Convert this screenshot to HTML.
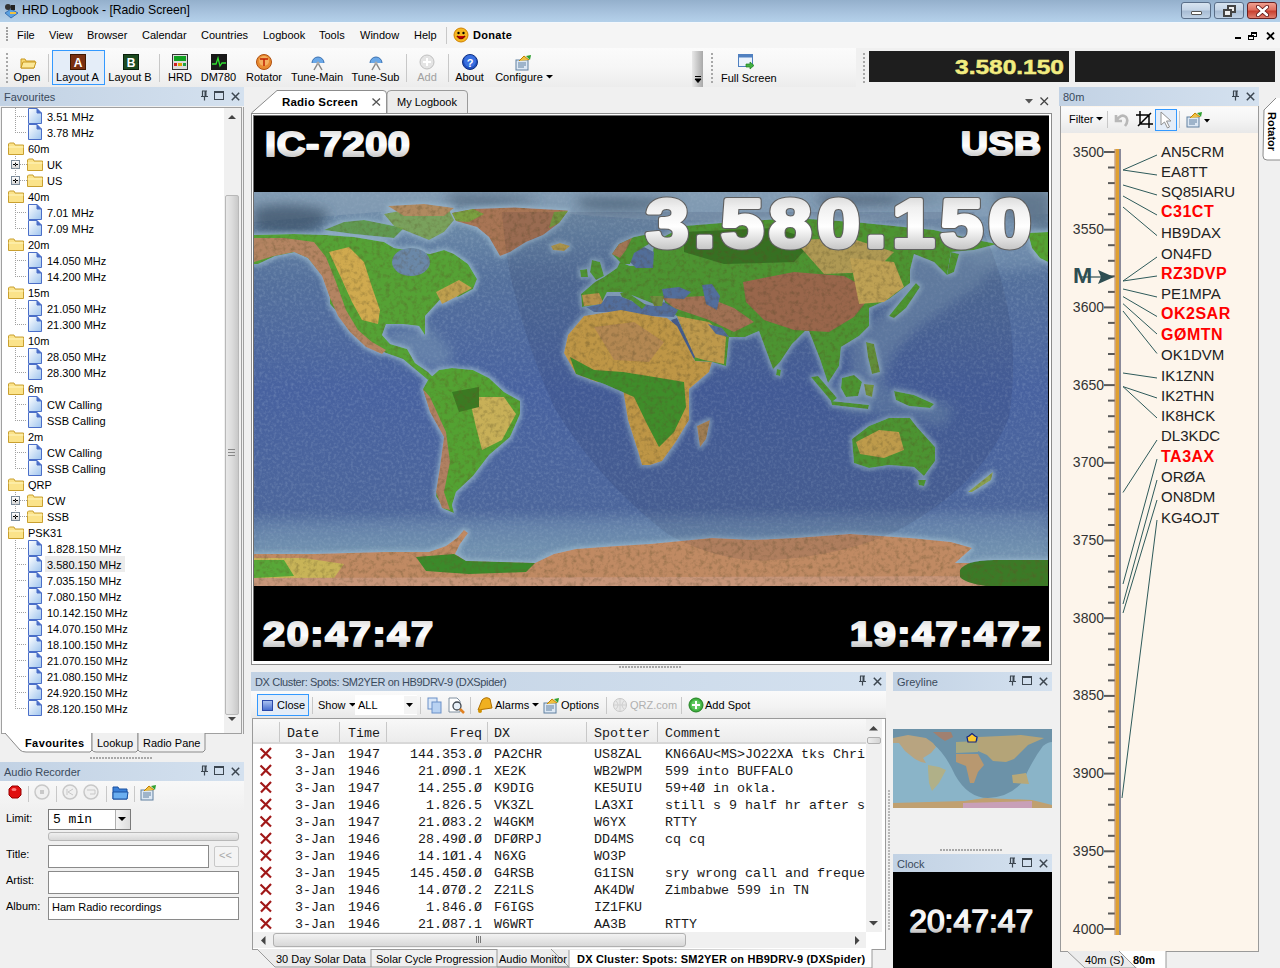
<!DOCTYPE html><html><head><meta charset="utf-8"><style>
*{box-sizing:border-box;margin:0;padding:0}
html,body{width:1280px;height:968px;overflow:hidden;background:#f0f0f0;font-family:"Liberation Sans",sans-serif;font-size:11px;color:#000}
.a{position:absolute}
.t{position:absolute;white-space:nowrap;line-height:1}
.hdr{position:absolute;height:19px;background:linear-gradient(#c9d8ea,#bccde2);color:#3c4a5a;font-size:12px}
.mono{font-family:"Liberation Mono",monospace}
</style></head><body>
<div class="a" style="left:0;top:0;width:1280px;height:22px;background:linear-gradient(#94b0cc,#a9c4df 60%,#b4d1ea)"></div>
<div class="a" style="left:0;top:22px;width:1280px;height:1px;background:#f4f8fc"></div>
<div class="t" style="left:22px;top:4px;font-size:12.2px;color:#000">HRD Logbook - [Radio Screen]</div>
<svg class="a" style="left:2px;top:2px" width="17" height="17"><path d="M3 11 L9 7 L16 11 L9 16 Z" fill="#5aa0e0" stroke="#3a70b0"/><circle cx="6" cy="5" r="3" fill="#333"/><rect x="9" y="3" width="4" height="5" fill="#222"/><rect x="8" y="10" width="6" height="2" fill="#f0c040"/></svg>
<div class="a" style="left:1181px;top:2px;width:30px;height:17px;border:1px solid #5a6e88;border-radius:3px;background:linear-gradient(#d8e4f0,#c4d4e6 45%,#a8bcd4 55%,#c0d2e6)"><div class="a" style="left:9px;top:8px;width:11px;height:4px;background:#fff;border:1px solid #555;border-radius:1px"></div></div>
<div class="a" style="left:1214px;top:2px;width:30px;height:17px;border:1px solid #5a6e88;border-radius:3px;background:linear-gradient(#d8e4f0,#c4d4e6 45%,#a8bcd4 55%,#c0d2e6)"><div class="a" style="left:12px;top:2px;width:9px;height:8px;border:2px solid #444;background:#eee"></div><div class="a" style="left:8px;top:6px;width:9px;height:8px;border:2px solid #444;background:#eee"></div></div>
<div class="a" style="left:1247px;top:2px;width:30px;height:17px;border:1px solid #6a2020;border-radius:3px;background:linear-gradient(#f0a090,#e07060 45%,#c84030 55%,#e08070)"><svg class="a" style="left:8px;top:2px" width="13" height="12"><path d="M2 2 L11 10 M11 2 L2 10" stroke="#5a1010" stroke-width="4.2" stroke-linecap="round"/><path d="M2 2 L11 10 M11 2 L2 10" stroke="#fff" stroke-width="2.6" stroke-linecap="round"/></svg></div>
<div class="a" style="left:0;top:23px;width:1280px;height:25px;background:#f5f5f5"></div>
<div class="a" style="left:6px;top:27px;width:2px;height:2px;background:#a0a0a0"></div>
<div class="a" style="left:6px;top:30px;width:2px;height:2px;background:#a0a0a0"></div>
<div class="a" style="left:6px;top:33px;width:2px;height:2px;background:#a0a0a0"></div>
<div class="a" style="left:6px;top:36px;width:2px;height:2px;background:#a0a0a0"></div>
<div class="a" style="left:6px;top:39px;width:2px;height:2px;background:#a0a0a0"></div>
<div class="t" style="left:17px;top:30px;font-size:11px">File</div>
<div class="t" style="left:49px;top:30px;font-size:11px">View</div>
<div class="t" style="left:87px;top:30px;font-size:11px">Browser</div>
<div class="t" style="left:142px;top:30px;font-size:11px">Calendar</div>
<div class="t" style="left:201px;top:30px;font-size:11px">Countries</div>
<div class="t" style="left:263px;top:30px;font-size:11px">Logbook</div>
<div class="t" style="left:319px;top:30px;font-size:11px">Tools</div>
<div class="t" style="left:360px;top:30px;font-size:11px">Window</div>
<div class="t" style="left:414px;top:30px;font-size:11px">Help</div>
<div class="a" style="left:446px;top:27px;width:1px;height:17px;background:#c8c8c8"></div>
<svg class="a" style="left:453px;top:27px" width="16" height="16"><circle cx="8" cy="8" r="7" fill="#f5b820" stroke="#d08000"/><circle cx="5.5" cy="6" r="1.2" fill="#000"/><circle cx="10.5" cy="6" r="1.2" fill="#000"/><path d="M4 9 Q8 14 12 9" stroke="#800" stroke-width="1.5" fill="#c00"/></svg>
<div class="t" style="left:473px;top:30px;font-size:11px;font-weight:bold;letter-spacing:0.3px">Donate</div>
<div class="a" style="left:1235px;top:37px;width:6px;height:2px;background:#000"></div>
<div class="a" style="left:1251px;top:32px;width:6px;height:5px;border:1px solid #000;border-top-width:2px"></div><div class="a" style="left:1248px;top:35px;width:6px;height:5px;border:1px solid #000;border-top-width:2px;background:#f5f5f5"></div>
<svg class="a" style="left:1266px;top:32px" width="9" height="8"><path d="M1 0.5 L8 7.5 M8 0.5 L1 7.5" stroke="#000" stroke-width="1.8"/></svg>
<div class="a" style="left:0;top:48px;width:706px;height:39px;background:linear-gradient(#fbfbfb,#f6f6f6 50%,#ececec)"></div>
<div class="a" style="left:6px;top:53px;width:2px;height:2px;background:#a8a8a8"></div>
<div class="a" style="left:6px;top:57px;width:2px;height:2px;background:#a8a8a8"></div>
<div class="a" style="left:6px;top:61px;width:2px;height:2px;background:#a8a8a8"></div>
<div class="a" style="left:6px;top:65px;width:2px;height:2px;background:#a8a8a8"></div>
<div class="a" style="left:6px;top:69px;width:2px;height:2px;background:#a8a8a8"></div>
<div class="a" style="left:6px;top:73px;width:2px;height:2px;background:#a8a8a8"></div>
<div class="a" style="left:6px;top:77px;width:2px;height:2px;background:#a8a8a8"></div>
<div class="a" style="left:6px;top:81px;width:2px;height:2px;background:#a8a8a8"></div>
<div class="a" style="left:52px;top:50px;width:53px;height:35px;border:1px solid #3399ff;background:#e4edf8"></div>
<div class="t" style="left:-33px;width:120px;text-align:center;top:72px;font-size:11px;color:#000">Open</div>
<div class="t" style="left:17.5px;width:120px;text-align:center;top:72px;font-size:11px;color:#000">Layout A</div>
<div class="t" style="left:70px;width:120px;text-align:center;top:72px;font-size:11px;color:#000">Layout B</div>
<div class="t" style="left:120px;width:120px;text-align:center;top:72px;font-size:11px;color:#000">HRD</div>
<div class="t" style="left:158.5px;width:120px;text-align:center;top:72px;font-size:11px;color:#000">DM780</div>
<div class="t" style="left:204px;width:120px;text-align:center;top:72px;font-size:11px;color:#000">Rotator</div>
<div class="t" style="left:257px;width:120px;text-align:center;top:72px;font-size:11px;color:#000">Tune-Main</div>
<div class="t" style="left:315.5px;width:120px;text-align:center;top:72px;font-size:11px;color:#000">Tune-Sub</div>
<div class="t" style="left:367px;width:120px;text-align:center;top:72px;font-size:11px;color:#a0a0a0">Add</div>
<div class="t" style="left:409.5px;width:120px;text-align:center;top:72px;font-size:11px;color:#000">About</div>
<div class="t" style="left:464px;width:120px;text-align:center;top:72px;font-size:11px;color:#000">Configure<svg width="7" height="4" style="display:inline-block;vertical-align:middle;margin-left:3px;margin-bottom:2px"><path d="M0 0 L7 0 L3.5 3.5 Z" fill="#000"/></svg></div>
<div class="a" style="left:48px;top:54px;width:1px;height:28px;background:#c8c8c8"></div>
<div class="a" style="left:159px;top:54px;width:1px;height:28px;background:#c8c8c8"></div>
<div class="a" style="left:406px;top:54px;width:1px;height:28px;background:#c8c8c8"></div>
<div class="a" style="left:448px;top:54px;width:1px;height:28px;background:#c8c8c8"></div>
<svg class="a" style="left:20px;top:54px" width="17" height="17"><path d="M1 5 L1 14 L14 14 L15 7 L6 7 L5 5 Z" fill="#f8d870" stroke="#c89820"/><path d="M3 8 L16 8 L14 14 L1 14 Z" fill="#fce898" stroke="#c89820"/></svg>
<svg class="a" style="left:70px;top:54px" width="17" height="17"><rect x="0.5" y="0.5" width="15" height="15" fill="#7a3010" stroke="#401800"/><text x="8" y="13" font-size="12" font-family="Liberation Sans" font-weight="bold" fill="#fff" text-anchor="middle">A</text></svg>
<svg class="a" style="left:123px;top:54px" width="17" height="17"><rect x="0.5" y="0.5" width="15" height="15" fill="#1c4a20" stroke="#0a200c"/><text x="8" y="13" font-size="12" font-family="Liberation Sans" font-weight="bold" fill="#fff" text-anchor="middle">B</text></svg>
<svg class="a" style="left:172px;top:54px" width="17" height="17"><rect x="0.5" y="0.5" width="15" height="15" fill="#ddd" stroke="#333"/><rect x="2" y="2" width="12" height="5" fill="#10a020"/><rect x="2" y="9" width="3" height="3" fill="#d02020"/><rect x="6" y="9" width="4" height="3" fill="#e0a000"/><rect x="11" y="9" width="3" height="3" fill="#20a040"/></svg>
<svg class="a" style="left:211px;top:54px" width="17" height="17"><rect x="0" y="0" width="16" height="16" fill="#181818"/><path d="M1 10 L5 10 L7 4 L9 12 L11 9 L15 9" stroke="#30e030" fill="none" stroke-width="1.3"/></svg>
<svg class="a" style="left:256px;top:54px" width="17" height="17"><circle cx="8" cy="8" r="7.5" fill="#e88a30" stroke="#b05010"/><circle cx="8" cy="7" r="5" fill="#f4b060"/><path d="M4 5 L12 5 M8 5 L8 12" stroke="#c02000" stroke-width="1.5"/></svg>
<svg class="a" style="left:310px;top:54px" width="17" height="17"><path d="M2 9 A6 6 0 0 1 14 9" fill="#6aa8e8" stroke="#3a70b0"/><path d="M8 9 L4 16 M8 9 L12 16" stroke="#888" stroke-width="1.5"/><circle cx="8" cy="9" r="1.5" fill="#aaa"/></svg>
<svg class="a" style="left:368px;top:54px" width="17" height="17"><path d="M2 9 A6 6 0 0 1 14 9" fill="#6aa8e8" stroke="#3a70b0"/><path d="M8 9 L4 16 M8 9 L12 16" stroke="#888" stroke-width="1.5"/><circle cx="8" cy="9" r="1.5" fill="#aaa"/></svg>
<svg class="a" style="left:419px;top:54px" width="17" height="17"><circle cx="8" cy="8" r="7" fill="#e4e4e4" stroke="#c0c0c0"/><path d="M8 4 L8 12 M4 8 L12 8" stroke="#fff" stroke-width="2"/></svg>
<svg class="a" style="left:462px;top:54px" width="17" height="17"><circle cx="8" cy="8" r="7.5" fill="#2050c0" stroke="#103080"/><circle cx="8" cy="7" r="6" fill="#3a70e0"/><text x="8" y="12.5" font-size="11" font-family="Liberation Sans" font-weight="bold" fill="#fff" text-anchor="middle">?</text></svg>
<svg class="a" style="left:515px;top:54px" width="17" height="17"><rect x="1" y="6" width="12" height="10" fill="#dde8f4" stroke="#6080a0"/><path d="M3 9 L11 9 M3 11 L11 11 M3 13 L9 13" stroke="#6080a0"/><path d="M4 7 L9 2 L14 6" fill="#f0c040" stroke="#c08000"/><path d="M11 2 L16 1 L15 6 Z" fill="#30a030"/></svg>
<div class="a" style="left:692px;top:51px;width:11px;height:36px;background:linear-gradient(90deg,#e8e8e8,#c8c8c8,#a8a8a8)"></div>
<svg class="a" style="left:694px;top:76px" width="8" height="8"><path d="M1 0.5 L7 0.5 M1 3 L7 3 L4 6.5 Z" stroke="#000" fill="#000"/></svg>
<div class="a" style="left:706px;top:48px;width:150px;height:39px;background:linear-gradient(#fbfbfb,#f6f6f6 50%,#ececec)"></div>
<div class="a" style="left:711px;top:53px;width:2px;height:2px;background:#a8a8a8"></div>
<div class="a" style="left:863px;top:53px;width:2px;height:2px;background:#a8a8a8"></div>
<div class="a" style="left:711px;top:57px;width:2px;height:2px;background:#a8a8a8"></div>
<div class="a" style="left:863px;top:57px;width:2px;height:2px;background:#a8a8a8"></div>
<div class="a" style="left:711px;top:61px;width:2px;height:2px;background:#a8a8a8"></div>
<div class="a" style="left:863px;top:61px;width:2px;height:2px;background:#a8a8a8"></div>
<div class="a" style="left:711px;top:65px;width:2px;height:2px;background:#a8a8a8"></div>
<div class="a" style="left:863px;top:65px;width:2px;height:2px;background:#a8a8a8"></div>
<div class="a" style="left:711px;top:69px;width:2px;height:2px;background:#a8a8a8"></div>
<div class="a" style="left:863px;top:69px;width:2px;height:2px;background:#a8a8a8"></div>
<div class="a" style="left:711px;top:73px;width:2px;height:2px;background:#a8a8a8"></div>
<div class="a" style="left:863px;top:73px;width:2px;height:2px;background:#a8a8a8"></div>
<div class="a" style="left:711px;top:77px;width:2px;height:2px;background:#a8a8a8"></div>
<div class="a" style="left:863px;top:77px;width:2px;height:2px;background:#a8a8a8"></div>
<div class="a" style="left:711px;top:81px;width:2px;height:2px;background:#a8a8a8"></div>
<div class="a" style="left:863px;top:81px;width:2px;height:2px;background:#a8a8a8"></div>
<svg class="a" style="left:738px;top:54px" width="17" height="17"><rect x="0.5" y="0.5" width="14" height="12" fill="#eaf2fc" stroke="#5080c0"/><rect x="0.5" y="0.5" width="14" height="3" fill="#5080c0"/><path d="M8 10 L12 10 L12 8 L16 11.5 L12 15 L12 13 L8 13 Z" fill="#40b040" stroke="#208020" stroke-width="0.7"/></svg>
<div class="t" style="left:721px;top:73px;font-size:11px">Full Screen</div>
<div class="a" style="left:869px;top:51px;width:200px;height:31px;background:#1e1e1e"></div>
<div class="a" style="left:1075px;top:51px;width:200px;height:31px;background:#1e1e1e"></div>
<svg class="a" style="left:950px;top:52px" width="120" height="28"><text x="5" y="21.8" font-family="Liberation Sans" font-weight="bold" font-size="20.5" textLength="109" lengthAdjust="spacingAndGlyphs" fill="#f2ec80" stroke="#f2ec80" stroke-width="0.5">3.580.150</text></svg>
<div class="a" style="left:0px;top:87px;width:244px;height:19px;background:linear-gradient(90deg,#c2d2e4,#d4e1ef)"></div>
<div class="t" style="left:4px;top:92px;font-size:11px;color:#3a4a5c;">Favourites</div>
<svg class="a" style="left:231px;top:92px" width="9" height="9"><path d="M0.8 0.8 L8.2 8.2 M8.2 0.8 L0.8 8.2" stroke="#3c4650" stroke-width="1.5"/></svg>
<div class="a" style="left:214px;top:91px;width:10px;height:9px;border:1px solid #3c4650;border-top-width:2px"></div>
<svg class="a" style="left:200px;top:90px" width="9" height="11"><path d="M2 1 L7 1 M2.5 1 L2.5 6.5 M1 6.5 L8 6.5 M4.5 6.5 L4.5 10.5" stroke="#3c4650" stroke-width="1.2" fill="none"/><rect x="4.5" y="1" width="2" height="5.5" fill="#3c4650"/></svg>
<div class="a" style="left:1px;top:107px;width:241px;height:627px;border:1px solid #a0a0a0;background:#fff"></div><div class="a" style="left:243px;top:107px;width:1px;height:627px;background:#a0a0a0"></div>
<div class="a" style="left:224px;top:108px;width:17px;height:625px;background:#f0f0f0"></div>
<svg class="a" style="left:227px;top:114px" width="10" height="6"><path d="M1 5 L5 1 L9 5 Z" fill="#444"/></svg>
<svg class="a" style="left:227px;top:716px" width="10" height="6"><path d="M1 1 L5 5 L9 1 Z" fill="#444"/></svg>
<div class="a" style="left:225px;top:195px;width:14px;height:520px;border:1px solid #b8b8b8;border-radius:2px;background:linear-gradient(90deg,#e8e8e8,#dcdcdc 50%,#c8c8c8)"></div>
<div class="a" style="left:228px;top:449px;width:7px;height:1px;background:#888"></div><div class="a" style="left:228px;top:452px;width:7px;height:1px;background:#888"></div><div class="a" style="left:228px;top:455px;width:7px;height:1px;background:#888"></div>
<svg width="0" height="0" style="position:absolute"><defs><linearGradient id="fg" x1="0" y1="0" x2="1" y2="1"><stop offset="0" stop-color="#ffffff"/><stop offset="1" stop-color="#9ec4ee"/></linearGradient></defs></svg>
<svg class="a" style="left:28px;top:108px" width="14" height="16"><path d="M0.5 0.5 L9 0.5 L13.5 5 L13.5 15.5 L0.5 15.5 Z" fill="url(#fg)" stroke="#4a6ec8"/><path d="M9 0.5 L9 5 L13.5 5" fill="#4a6ec8" stroke="#4a6ec8"/></svg>
<div class="a" style="left:15px;top:116px;width:12px;height:1px;background:repeating-linear-gradient(90deg,#a0a0a0 0 1px,transparent 1px 2px)"></div>
<div class="t" style="left:47px;top:112px;font-size:11px">3.51 MHz</div>
<svg class="a" style="left:28px;top:124px" width="14" height="16"><path d="M0.5 0.5 L9 0.5 L13.5 5 L13.5 15.5 L0.5 15.5 Z" fill="url(#fg)" stroke="#4a6ec8"/><path d="M9 0.5 L9 5 L13.5 5" fill="#4a6ec8" stroke="#4a6ec8"/></svg>
<div class="a" style="left:15px;top:132px;width:12px;height:1px;background:repeating-linear-gradient(90deg,#a0a0a0 0 1px,transparent 1px 2px)"></div>
<div class="t" style="left:47px;top:128px;font-size:11px">3.78 MHz</div>
<svg class="a" style="left:8px;top:142px" width="16" height="13"><path d="M0.5 2 L0.5 12.5 L15.5 12.5 L15.5 3 L7 3 L6 1 L1.5 1 Z" fill="#fbe38a" stroke="#c9a030"/><path d="M0.5 5 L15.5 5" stroke="#fff6c0"/></svg>
<div class="t" style="left:28px;top:144px;font-size:11px">60m</div>
<div class="a" style="left:11px;top:160px;width:9px;height:9px;border:1px solid #7a8a99;background:linear-gradient(#fff,#d8d8d8)"></div>
<div class="a" style="left:13px;top:164px;width:5px;height:1px;background:#000"></div><div class="a" style="left:15px;top:162px;width:1px;height:5px;background:#000"></div>
<svg class="a" style="left:27px;top:158px" width="16" height="13"><path d="M0.5 2 L0.5 12.5 L15.5 12.5 L15.5 3 L7 3 L6 1 L1.5 1 Z" fill="#fbe38a" stroke="#c9a030"/><path d="M0.5 5 L15.5 5" stroke="#fff6c0"/></svg>
<div class="a" style="left:20px;top:164px;width:7px;height:1px;background:repeating-linear-gradient(90deg,#a0a0a0 0 1px,transparent 1px 2px)"></div>
<div class="t" style="left:47px;top:160px;font-size:11px">UK</div>
<div class="a" style="left:11px;top:176px;width:9px;height:9px;border:1px solid #7a8a99;background:linear-gradient(#fff,#d8d8d8)"></div>
<div class="a" style="left:13px;top:180px;width:5px;height:1px;background:#000"></div><div class="a" style="left:15px;top:178px;width:1px;height:5px;background:#000"></div>
<svg class="a" style="left:27px;top:174px" width="16" height="13"><path d="M0.5 2 L0.5 12.5 L15.5 12.5 L15.5 3 L7 3 L6 1 L1.5 1 Z" fill="#fbe38a" stroke="#c9a030"/><path d="M0.5 5 L15.5 5" stroke="#fff6c0"/></svg>
<div class="a" style="left:20px;top:180px;width:7px;height:1px;background:repeating-linear-gradient(90deg,#a0a0a0 0 1px,transparent 1px 2px)"></div>
<div class="t" style="left:47px;top:176px;font-size:11px">US</div>
<svg class="a" style="left:8px;top:190px" width="16" height="13"><path d="M0.5 2 L0.5 12.5 L15.5 12.5 L15.5 3 L7 3 L6 1 L1.5 1 Z" fill="#fbe38a" stroke="#c9a030"/><path d="M0.5 5 L15.5 5" stroke="#fff6c0"/></svg>
<div class="t" style="left:28px;top:192px;font-size:11px">40m</div>
<svg class="a" style="left:28px;top:204px" width="14" height="16"><path d="M0.5 0.5 L9 0.5 L13.5 5 L13.5 15.5 L0.5 15.5 Z" fill="url(#fg)" stroke="#4a6ec8"/><path d="M9 0.5 L9 5 L13.5 5" fill="#4a6ec8" stroke="#4a6ec8"/></svg>
<div class="a" style="left:15px;top:212px;width:12px;height:1px;background:repeating-linear-gradient(90deg,#a0a0a0 0 1px,transparent 1px 2px)"></div>
<div class="t" style="left:47px;top:208px;font-size:11px">7.01 MHz</div>
<svg class="a" style="left:28px;top:220px" width="14" height="16"><path d="M0.5 0.5 L9 0.5 L13.5 5 L13.5 15.5 L0.5 15.5 Z" fill="url(#fg)" stroke="#4a6ec8"/><path d="M9 0.5 L9 5 L13.5 5" fill="#4a6ec8" stroke="#4a6ec8"/></svg>
<div class="a" style="left:15px;top:228px;width:12px;height:1px;background:repeating-linear-gradient(90deg,#a0a0a0 0 1px,transparent 1px 2px)"></div>
<div class="t" style="left:47px;top:224px;font-size:11px">7.09 MHz</div>
<svg class="a" style="left:8px;top:238px" width="16" height="13"><path d="M0.5 2 L0.5 12.5 L15.5 12.5 L15.5 3 L7 3 L6 1 L1.5 1 Z" fill="#fbe38a" stroke="#c9a030"/><path d="M0.5 5 L15.5 5" stroke="#fff6c0"/></svg>
<div class="t" style="left:28px;top:240px;font-size:11px">20m</div>
<svg class="a" style="left:28px;top:252px" width="14" height="16"><path d="M0.5 0.5 L9 0.5 L13.5 5 L13.5 15.5 L0.5 15.5 Z" fill="url(#fg)" stroke="#4a6ec8"/><path d="M9 0.5 L9 5 L13.5 5" fill="#4a6ec8" stroke="#4a6ec8"/></svg>
<div class="a" style="left:15px;top:260px;width:12px;height:1px;background:repeating-linear-gradient(90deg,#a0a0a0 0 1px,transparent 1px 2px)"></div>
<div class="t" style="left:47px;top:256px;font-size:11px">14.050 MHz</div>
<svg class="a" style="left:28px;top:268px" width="14" height="16"><path d="M0.5 0.5 L9 0.5 L13.5 5 L13.5 15.5 L0.5 15.5 Z" fill="url(#fg)" stroke="#4a6ec8"/><path d="M9 0.5 L9 5 L13.5 5" fill="#4a6ec8" stroke="#4a6ec8"/></svg>
<div class="a" style="left:15px;top:276px;width:12px;height:1px;background:repeating-linear-gradient(90deg,#a0a0a0 0 1px,transparent 1px 2px)"></div>
<div class="t" style="left:47px;top:272px;font-size:11px">14.200 MHz</div>
<svg class="a" style="left:8px;top:286px" width="16" height="13"><path d="M0.5 2 L0.5 12.5 L15.5 12.5 L15.5 3 L7 3 L6 1 L1.5 1 Z" fill="#fbe38a" stroke="#c9a030"/><path d="M0.5 5 L15.5 5" stroke="#fff6c0"/></svg>
<div class="t" style="left:28px;top:288px;font-size:11px">15m</div>
<svg class="a" style="left:28px;top:300px" width="14" height="16"><path d="M0.5 0.5 L9 0.5 L13.5 5 L13.5 15.5 L0.5 15.5 Z" fill="url(#fg)" stroke="#4a6ec8"/><path d="M9 0.5 L9 5 L13.5 5" fill="#4a6ec8" stroke="#4a6ec8"/></svg>
<div class="a" style="left:15px;top:308px;width:12px;height:1px;background:repeating-linear-gradient(90deg,#a0a0a0 0 1px,transparent 1px 2px)"></div>
<div class="t" style="left:47px;top:304px;font-size:11px">21.050 MHz</div>
<svg class="a" style="left:28px;top:316px" width="14" height="16"><path d="M0.5 0.5 L9 0.5 L13.5 5 L13.5 15.5 L0.5 15.5 Z" fill="url(#fg)" stroke="#4a6ec8"/><path d="M9 0.5 L9 5 L13.5 5" fill="#4a6ec8" stroke="#4a6ec8"/></svg>
<div class="a" style="left:15px;top:324px;width:12px;height:1px;background:repeating-linear-gradient(90deg,#a0a0a0 0 1px,transparent 1px 2px)"></div>
<div class="t" style="left:47px;top:320px;font-size:11px">21.300 MHz</div>
<svg class="a" style="left:8px;top:334px" width="16" height="13"><path d="M0.5 2 L0.5 12.5 L15.5 12.5 L15.5 3 L7 3 L6 1 L1.5 1 Z" fill="#fbe38a" stroke="#c9a030"/><path d="M0.5 5 L15.5 5" stroke="#fff6c0"/></svg>
<div class="t" style="left:28px;top:336px;font-size:11px">10m</div>
<svg class="a" style="left:28px;top:348px" width="14" height="16"><path d="M0.5 0.5 L9 0.5 L13.5 5 L13.5 15.5 L0.5 15.5 Z" fill="url(#fg)" stroke="#4a6ec8"/><path d="M9 0.5 L9 5 L13.5 5" fill="#4a6ec8" stroke="#4a6ec8"/></svg>
<div class="a" style="left:15px;top:356px;width:12px;height:1px;background:repeating-linear-gradient(90deg,#a0a0a0 0 1px,transparent 1px 2px)"></div>
<div class="t" style="left:47px;top:352px;font-size:11px">28.050 MHz</div>
<svg class="a" style="left:28px;top:364px" width="14" height="16"><path d="M0.5 0.5 L9 0.5 L13.5 5 L13.5 15.5 L0.5 15.5 Z" fill="url(#fg)" stroke="#4a6ec8"/><path d="M9 0.5 L9 5 L13.5 5" fill="#4a6ec8" stroke="#4a6ec8"/></svg>
<div class="a" style="left:15px;top:372px;width:12px;height:1px;background:repeating-linear-gradient(90deg,#a0a0a0 0 1px,transparent 1px 2px)"></div>
<div class="t" style="left:47px;top:368px;font-size:11px">28.300 MHz</div>
<svg class="a" style="left:8px;top:382px" width="16" height="13"><path d="M0.5 2 L0.5 12.5 L15.5 12.5 L15.5 3 L7 3 L6 1 L1.5 1 Z" fill="#fbe38a" stroke="#c9a030"/><path d="M0.5 5 L15.5 5" stroke="#fff6c0"/></svg>
<div class="t" style="left:28px;top:384px;font-size:11px">6m</div>
<svg class="a" style="left:28px;top:396px" width="14" height="16"><path d="M0.5 0.5 L9 0.5 L13.5 5 L13.5 15.5 L0.5 15.5 Z" fill="url(#fg)" stroke="#4a6ec8"/><path d="M9 0.5 L9 5 L13.5 5" fill="#4a6ec8" stroke="#4a6ec8"/></svg>
<div class="a" style="left:15px;top:404px;width:12px;height:1px;background:repeating-linear-gradient(90deg,#a0a0a0 0 1px,transparent 1px 2px)"></div>
<div class="t" style="left:47px;top:400px;font-size:11px">CW Calling</div>
<svg class="a" style="left:28px;top:412px" width="14" height="16"><path d="M0.5 0.5 L9 0.5 L13.5 5 L13.5 15.5 L0.5 15.5 Z" fill="url(#fg)" stroke="#4a6ec8"/><path d="M9 0.5 L9 5 L13.5 5" fill="#4a6ec8" stroke="#4a6ec8"/></svg>
<div class="a" style="left:15px;top:420px;width:12px;height:1px;background:repeating-linear-gradient(90deg,#a0a0a0 0 1px,transparent 1px 2px)"></div>
<div class="t" style="left:47px;top:416px;font-size:11px">SSB Calling</div>
<svg class="a" style="left:8px;top:430px" width="16" height="13"><path d="M0.5 2 L0.5 12.5 L15.5 12.5 L15.5 3 L7 3 L6 1 L1.5 1 Z" fill="#fbe38a" stroke="#c9a030"/><path d="M0.5 5 L15.5 5" stroke="#fff6c0"/></svg>
<div class="t" style="left:28px;top:432px;font-size:11px">2m</div>
<svg class="a" style="left:28px;top:444px" width="14" height="16"><path d="M0.5 0.5 L9 0.5 L13.5 5 L13.5 15.5 L0.5 15.5 Z" fill="url(#fg)" stroke="#4a6ec8"/><path d="M9 0.5 L9 5 L13.5 5" fill="#4a6ec8" stroke="#4a6ec8"/></svg>
<div class="a" style="left:15px;top:452px;width:12px;height:1px;background:repeating-linear-gradient(90deg,#a0a0a0 0 1px,transparent 1px 2px)"></div>
<div class="t" style="left:47px;top:448px;font-size:11px">CW Calling</div>
<svg class="a" style="left:28px;top:460px" width="14" height="16"><path d="M0.5 0.5 L9 0.5 L13.5 5 L13.5 15.5 L0.5 15.5 Z" fill="url(#fg)" stroke="#4a6ec8"/><path d="M9 0.5 L9 5 L13.5 5" fill="#4a6ec8" stroke="#4a6ec8"/></svg>
<div class="a" style="left:15px;top:468px;width:12px;height:1px;background:repeating-linear-gradient(90deg,#a0a0a0 0 1px,transparent 1px 2px)"></div>
<div class="t" style="left:47px;top:464px;font-size:11px">SSB Calling</div>
<svg class="a" style="left:8px;top:478px" width="16" height="13"><path d="M0.5 2 L0.5 12.5 L15.5 12.5 L15.5 3 L7 3 L6 1 L1.5 1 Z" fill="#fbe38a" stroke="#c9a030"/><path d="M0.5 5 L15.5 5" stroke="#fff6c0"/></svg>
<div class="t" style="left:28px;top:480px;font-size:11px">QRP</div>
<div class="a" style="left:11px;top:496px;width:9px;height:9px;border:1px solid #7a8a99;background:linear-gradient(#fff,#d8d8d8)"></div>
<div class="a" style="left:13px;top:500px;width:5px;height:1px;background:#000"></div><div class="a" style="left:15px;top:498px;width:1px;height:5px;background:#000"></div>
<svg class="a" style="left:27px;top:494px" width="16" height="13"><path d="M0.5 2 L0.5 12.5 L15.5 12.5 L15.5 3 L7 3 L6 1 L1.5 1 Z" fill="#fbe38a" stroke="#c9a030"/><path d="M0.5 5 L15.5 5" stroke="#fff6c0"/></svg>
<div class="a" style="left:20px;top:500px;width:7px;height:1px;background:repeating-linear-gradient(90deg,#a0a0a0 0 1px,transparent 1px 2px)"></div>
<div class="t" style="left:47px;top:496px;font-size:11px">CW</div>
<div class="a" style="left:11px;top:512px;width:9px;height:9px;border:1px solid #7a8a99;background:linear-gradient(#fff,#d8d8d8)"></div>
<div class="a" style="left:13px;top:516px;width:5px;height:1px;background:#000"></div><div class="a" style="left:15px;top:514px;width:1px;height:5px;background:#000"></div>
<svg class="a" style="left:27px;top:510px" width="16" height="13"><path d="M0.5 2 L0.5 12.5 L15.5 12.5 L15.5 3 L7 3 L6 1 L1.5 1 Z" fill="#fbe38a" stroke="#c9a030"/><path d="M0.5 5 L15.5 5" stroke="#fff6c0"/></svg>
<div class="a" style="left:20px;top:516px;width:7px;height:1px;background:repeating-linear-gradient(90deg,#a0a0a0 0 1px,transparent 1px 2px)"></div>
<div class="t" style="left:47px;top:512px;font-size:11px">SSB</div>
<svg class="a" style="left:8px;top:526px" width="16" height="13"><path d="M0.5 2 L0.5 12.5 L15.5 12.5 L15.5 3 L7 3 L6 1 L1.5 1 Z" fill="#fbe38a" stroke="#c9a030"/><path d="M0.5 5 L15.5 5" stroke="#fff6c0"/></svg>
<div class="t" style="left:28px;top:528px;font-size:11px">PSK31</div>
<svg class="a" style="left:28px;top:540px" width="14" height="16"><path d="M0.5 0.5 L9 0.5 L13.5 5 L13.5 15.5 L0.5 15.5 Z" fill="url(#fg)" stroke="#4a6ec8"/><path d="M9 0.5 L9 5 L13.5 5" fill="#4a6ec8" stroke="#4a6ec8"/></svg>
<div class="a" style="left:15px;top:548px;width:12px;height:1px;background:repeating-linear-gradient(90deg,#a0a0a0 0 1px,transparent 1px 2px)"></div>
<div class="t" style="left:47px;top:544px;font-size:11px">1.828.150 MHz</div>
<svg class="a" style="left:28px;top:556px" width="14" height="16"><path d="M0.5 0.5 L9 0.5 L13.5 5 L13.5 15.5 L0.5 15.5 Z" fill="url(#fg)" stroke="#4a6ec8"/><path d="M9 0.5 L9 5 L13.5 5" fill="#4a6ec8" stroke="#4a6ec8"/></svg>
<div class="a" style="left:15px;top:564px;width:12px;height:1px;background:repeating-linear-gradient(90deg,#a0a0a0 0 1px,transparent 1px 2px)"></div>
<div class="a" style="left:45px;top:556px;width:80px;height:16px;background:#ececec"></div>
<div class="t" style="left:47px;top:560px;font-size:11px">3.580.150 MHz</div>
<svg class="a" style="left:28px;top:572px" width="14" height="16"><path d="M0.5 0.5 L9 0.5 L13.5 5 L13.5 15.5 L0.5 15.5 Z" fill="url(#fg)" stroke="#4a6ec8"/><path d="M9 0.5 L9 5 L13.5 5" fill="#4a6ec8" stroke="#4a6ec8"/></svg>
<div class="a" style="left:15px;top:580px;width:12px;height:1px;background:repeating-linear-gradient(90deg,#a0a0a0 0 1px,transparent 1px 2px)"></div>
<div class="t" style="left:47px;top:576px;font-size:11px">7.035.150 MHz</div>
<svg class="a" style="left:28px;top:588px" width="14" height="16"><path d="M0.5 0.5 L9 0.5 L13.5 5 L13.5 15.5 L0.5 15.5 Z" fill="url(#fg)" stroke="#4a6ec8"/><path d="M9 0.5 L9 5 L13.5 5" fill="#4a6ec8" stroke="#4a6ec8"/></svg>
<div class="a" style="left:15px;top:596px;width:12px;height:1px;background:repeating-linear-gradient(90deg,#a0a0a0 0 1px,transparent 1px 2px)"></div>
<div class="t" style="left:47px;top:592px;font-size:11px">7.080.150 MHz</div>
<svg class="a" style="left:28px;top:604px" width="14" height="16"><path d="M0.5 0.5 L9 0.5 L13.5 5 L13.5 15.5 L0.5 15.5 Z" fill="url(#fg)" stroke="#4a6ec8"/><path d="M9 0.5 L9 5 L13.5 5" fill="#4a6ec8" stroke="#4a6ec8"/></svg>
<div class="a" style="left:15px;top:612px;width:12px;height:1px;background:repeating-linear-gradient(90deg,#a0a0a0 0 1px,transparent 1px 2px)"></div>
<div class="t" style="left:47px;top:608px;font-size:11px">10.142.150 MHz</div>
<svg class="a" style="left:28px;top:620px" width="14" height="16"><path d="M0.5 0.5 L9 0.5 L13.5 5 L13.5 15.5 L0.5 15.5 Z" fill="url(#fg)" stroke="#4a6ec8"/><path d="M9 0.5 L9 5 L13.5 5" fill="#4a6ec8" stroke="#4a6ec8"/></svg>
<div class="a" style="left:15px;top:628px;width:12px;height:1px;background:repeating-linear-gradient(90deg,#a0a0a0 0 1px,transparent 1px 2px)"></div>
<div class="t" style="left:47px;top:624px;font-size:11px">14.070.150 MHz</div>
<svg class="a" style="left:28px;top:636px" width="14" height="16"><path d="M0.5 0.5 L9 0.5 L13.5 5 L13.5 15.5 L0.5 15.5 Z" fill="url(#fg)" stroke="#4a6ec8"/><path d="M9 0.5 L9 5 L13.5 5" fill="#4a6ec8" stroke="#4a6ec8"/></svg>
<div class="a" style="left:15px;top:644px;width:12px;height:1px;background:repeating-linear-gradient(90deg,#a0a0a0 0 1px,transparent 1px 2px)"></div>
<div class="t" style="left:47px;top:640px;font-size:11px">18.100.150 MHz</div>
<svg class="a" style="left:28px;top:652px" width="14" height="16"><path d="M0.5 0.5 L9 0.5 L13.5 5 L13.5 15.5 L0.5 15.5 Z" fill="url(#fg)" stroke="#4a6ec8"/><path d="M9 0.5 L9 5 L13.5 5" fill="#4a6ec8" stroke="#4a6ec8"/></svg>
<div class="a" style="left:15px;top:660px;width:12px;height:1px;background:repeating-linear-gradient(90deg,#a0a0a0 0 1px,transparent 1px 2px)"></div>
<div class="t" style="left:47px;top:656px;font-size:11px">21.070.150 MHz</div>
<svg class="a" style="left:28px;top:668px" width="14" height="16"><path d="M0.5 0.5 L9 0.5 L13.5 5 L13.5 15.5 L0.5 15.5 Z" fill="url(#fg)" stroke="#4a6ec8"/><path d="M9 0.5 L9 5 L13.5 5" fill="#4a6ec8" stroke="#4a6ec8"/></svg>
<div class="a" style="left:15px;top:676px;width:12px;height:1px;background:repeating-linear-gradient(90deg,#a0a0a0 0 1px,transparent 1px 2px)"></div>
<div class="t" style="left:47px;top:672px;font-size:11px">21.080.150 MHz</div>
<svg class="a" style="left:28px;top:684px" width="14" height="16"><path d="M0.5 0.5 L9 0.5 L13.5 5 L13.5 15.5 L0.5 15.5 Z" fill="url(#fg)" stroke="#4a6ec8"/><path d="M9 0.5 L9 5 L13.5 5" fill="#4a6ec8" stroke="#4a6ec8"/></svg>
<div class="a" style="left:15px;top:692px;width:12px;height:1px;background:repeating-linear-gradient(90deg,#a0a0a0 0 1px,transparent 1px 2px)"></div>
<div class="t" style="left:47px;top:688px;font-size:11px">24.920.150 MHz</div>
<svg class="a" style="left:28px;top:700px" width="14" height="16"><path d="M0.5 0.5 L9 0.5 L13.5 5 L13.5 15.5 L0.5 15.5 Z" fill="url(#fg)" stroke="#4a6ec8"/><path d="M9 0.5 L9 5 L13.5 5" fill="#4a6ec8" stroke="#4a6ec8"/></svg>
<div class="a" style="left:15px;top:708px;width:12px;height:1px;background:repeating-linear-gradient(90deg,#a0a0a0 0 1px,transparent 1px 2px)"></div>
<div class="t" style="left:47px;top:704px;font-size:11px">28.120.150 MHz</div>
<div class="a" style="left:15px;top:108px;width:1px;height:25px;background:repeating-linear-gradient(#a0a0a0 0 1px,transparent 1px 2px)"></div>
<div class="a" style="left:15px;top:156px;width:1px;height:25px;background:repeating-linear-gradient(#a0a0a0 0 1px,transparent 1px 2px)"></div>
<div class="a" style="left:15px;top:204px;width:1px;height:25px;background:repeating-linear-gradient(#a0a0a0 0 1px,transparent 1px 2px)"></div>
<div class="a" style="left:15px;top:252px;width:1px;height:25px;background:repeating-linear-gradient(#a0a0a0 0 1px,transparent 1px 2px)"></div>
<div class="a" style="left:15px;top:300px;width:1px;height:25px;background:repeating-linear-gradient(#a0a0a0 0 1px,transparent 1px 2px)"></div>
<div class="a" style="left:15px;top:348px;width:1px;height:25px;background:repeating-linear-gradient(#a0a0a0 0 1px,transparent 1px 2px)"></div>
<div class="a" style="left:15px;top:396px;width:1px;height:25px;background:repeating-linear-gradient(#a0a0a0 0 1px,transparent 1px 2px)"></div>
<div class="a" style="left:15px;top:444px;width:1px;height:25px;background:repeating-linear-gradient(#a0a0a0 0 1px,transparent 1px 2px)"></div>
<div class="a" style="left:15px;top:492px;width:1px;height:25px;background:repeating-linear-gradient(#a0a0a0 0 1px,transparent 1px 2px)"></div>
<div class="a" style="left:15px;top:540px;width:1px;height:169px;background:repeating-linear-gradient(#a0a0a0 0 1px,transparent 1px 2px)"></div>
<div class="a" style="left:0;top:734px;width:244px;height:24px;background:#f0f0f0"></div>
<svg class="a" style="left:0;top:733px" width="244" height="22"><path d="M5 0 L20 17 Q22 19 26 19 L90 19 L92 17 L92 0" fill="#fff" stroke="#8a8a8a"/><path d="M92 0 L92 17 Q93 19 96 19 L136 19 L138 17 L138 0" fill="#f0f0f0" stroke="#8a8a8a"/><path d="M138 0 L138 17 Q139 19 142 19 L203 19 L205 17 L205 0" fill="#f0f0f0" stroke="#8a8a8a"/></svg>
<div class="t" style="left:25px;top:738px;font-size:11px;font-weight:bold;letter-spacing:0.4px">Favourites</div>
<div class="t" style="left:97px;top:738px;font-size:11px">Lookup</div>
<div class="t" style="left:143px;top:738px;font-size:11px">Radio Pane</div>
<div class="a" style="left:90px;top:757px;width:2px;height:2px;background:#a8a8a8"></div>
<div class="a" style="left:93px;top:757px;width:2px;height:2px;background:#a8a8a8"></div>
<div class="a" style="left:96px;top:757px;width:2px;height:2px;background:#a8a8a8"></div>
<div class="a" style="left:99px;top:757px;width:2px;height:2px;background:#a8a8a8"></div>
<div class="a" style="left:102px;top:757px;width:2px;height:2px;background:#a8a8a8"></div>
<div class="a" style="left:105px;top:757px;width:2px;height:2px;background:#a8a8a8"></div>
<div class="a" style="left:108px;top:757px;width:2px;height:2px;background:#a8a8a8"></div>
<div class="a" style="left:111px;top:757px;width:2px;height:2px;background:#a8a8a8"></div>
<div class="a" style="left:114px;top:757px;width:2px;height:2px;background:#a8a8a8"></div>
<div class="a" style="left:117px;top:757px;width:2px;height:2px;background:#a8a8a8"></div>
<div class="a" style="left:120px;top:757px;width:2px;height:2px;background:#a8a8a8"></div>
<div class="a" style="left:123px;top:757px;width:2px;height:2px;background:#a8a8a8"></div>
<div class="a" style="left:126px;top:757px;width:2px;height:2px;background:#a8a8a8"></div>
<div class="a" style="left:129px;top:757px;width:2px;height:2px;background:#a8a8a8"></div>
<div class="a" style="left:132px;top:757px;width:2px;height:2px;background:#a8a8a8"></div>
<div class="a" style="left:135px;top:757px;width:2px;height:2px;background:#a8a8a8"></div>
<div class="a" style="left:138px;top:757px;width:2px;height:2px;background:#a8a8a8"></div>
<div class="a" style="left:141px;top:757px;width:2px;height:2px;background:#a8a8a8"></div>
<div class="a" style="left:144px;top:757px;width:2px;height:2px;background:#a8a8a8"></div>
<div class="a" style="left:147px;top:757px;width:2px;height:2px;background:#a8a8a8"></div>
<div class="a" style="left:150px;top:757px;width:2px;height:2px;background:#a8a8a8"></div>
<div class="a" style="left:0px;top:762px;width:244px;height:19px;background:linear-gradient(90deg,#c2d2e4,#d4e1ef)"></div>
<div class="t" style="left:4px;top:767px;font-size:11px;color:#3a4a5c;">Audio Recorder</div>
<svg class="a" style="left:231px;top:767px" width="9" height="9"><path d="M0.8 0.8 L8.2 8.2 M8.2 0.8 L0.8 8.2" stroke="#3c4650" stroke-width="1.5"/></svg>
<div class="a" style="left:214px;top:766px;width:10px;height:9px;border:1px solid #3c4650;border-top-width:2px"></div>
<svg class="a" style="left:200px;top:765px" width="9" height="11"><path d="M2 1 L7 1 M2.5 1 L2.5 6.5 M1 6.5 L8 6.5 M4.5 6.5 L4.5 10.5" stroke="#3c4650" stroke-width="1.2" fill="none"/><rect x="4.5" y="1" width="2" height="5.5" fill="#3c4650"/></svg>
<div class="a" style="left:0;top:781px;width:244px;height:187px;background:linear-gradient(#f8f8f8,#f0f0f0 30px)"></div>
<svg class="a" style="left:8px;top:785px" width="14" height="14"><path d="M4 1 L10 1 L13 4 L13 10 L10 13 L4 13 L1 10 L1 4 Z" fill="#e01010" stroke="#900"/><ellipse cx="6" cy="4.5" rx="2.5" ry="1.5" fill="#ff8080"/></svg>
<div class="a" style="left:28px;top:786px;width:1px;height:16px;background:#c8c8c8"></div>
<div class="a" style="left:56px;top:786px;width:1px;height:16px;background:#c8c8c8"></div>
<div class="a" style="left:106px;top:786px;width:1px;height:16px;background:#c8c8c8"></div>
<div class="a" style="left:134px;top:786px;width:1px;height:16px;background:#c8c8c8"></div>
<svg class="a" style="left:34px;top:784px" width="90" height="17"><circle cx="8" cy="8" r="7" fill="#f0f0f0" stroke="#c8c8c8" stroke-width="1.5"/><rect x="6" y="6" width="4" height="4" fill="#c8c8c8"/><circle cx="36" cy="8" r="7" fill="#f0f0f0" stroke="#c8c8c8" stroke-width="1.5"/><path d="M33 5 L33 11 M39 5 L34 8 L39 11" stroke="#c8c8c8" fill="none"/><circle cx="57" cy="8" r="7" fill="#f0f0f0" stroke="#c8c8c8" stroke-width="1.5"/><path d="M53 6 L61 6 L61 10 L56 10" stroke="#c8c8c8" fill="none"/></svg>
<svg class="a" style="left:112px;top:784px" width="17" height="16"><path d="M1 3 L1 15 L15 15 L15 5 L7 5 L6 3 Z" fill="#3a80d8" stroke="#1a50a0"/><path d="M1 8 L16 8 L15 15 L1 15 Z" fill="#6aaef0" stroke="#1a50a0"/></svg>
<svg class="a" style="left:140px;top:784px" width="17" height="17"><rect x="1" y="6" width="12" height="10" fill="#dde8f4" stroke="#6080a0"/><path d="M3 9 L11 9 M3 11 L11 11 M3 13 L9 13" stroke="#6080a0"/><path d="M4 7 L9 2 L14 6" fill="#f0c040" stroke="#c08000"/><path d="M11 2 L16 1 L15 6 Z" fill="#30a030"/></svg>
<div class="t" style="left:6px;top:813px;font-size:11px">Limit:</div>
<div class="a" style="left:48px;top:809px;width:83px;height:21px;border:1px solid #7a7a7a;background:#fff"></div>
<div class="t mono" style="left:53px;top:813px;font-size:13px">5 min</div>
<div class="a" style="left:115px;top:810px;width:15px;height:19px;border-left:1px solid #b0b0b0;background:linear-gradient(90deg,#f4f4f4,#dcdcdc)"></div>
<svg class="a" style="left:118px;top:817px" width="9" height="5"><path d="M0 0 L8 0 L4 4 Z" fill="#000"/></svg>
<div class="a" style="left:48px;top:832px;width:191px;height:9px;border:1px solid #b8b8b8;border-radius:3px;background:linear-gradient(#f0f0f0,#d8d8d8)"></div>
<div class="t" style="left:6px;top:849px;font-size:11px">Title:</div>
<div class="a" style="left:48px;top:845px;width:161px;height:23px;border:1px solid #8a8a8a;background:#fff"></div>
<div class="a" style="left:214px;top:846px;width:25px;height:21px;border:1px solid #c8c8c8;border-radius:2px;background:#f4f4f4"></div>
<div class="t" style="left:219px;top:850px;font-size:11px;color:#a8a8a8">&lt;&lt;</div>
<div class="t" style="left:6px;top:875px;font-size:11px">Artist:</div>
<div class="a" style="left:48px;top:871px;width:191px;height:23px;border:1px solid #8a8a8a;background:#fff"></div>
<div class="t" style="left:6px;top:901px;font-size:11px">Album:</div>
<div class="a" style="left:48px;top:897px;width:191px;height:23px;border:1px solid #8a8a8a;background:#fff"></div>
<div class="t" style="left:52px;top:902px;font-size:11px">Ham Radio recordings</div>
<div class="a" style="left:244px;top:87px;width:6px;height:881px;background:#f0f0f0"></div>
<div class="a" style="left:250px;top:87px;width:809px;height:881px;background:#f0f0f0"></div>
<svg class="a" style="left:250px;top:89px" width="230" height="26"><path d="M1.5 24 L27 1.5 L133 1.5 Q136.5 1.5 136.5 5 L136.5 24" fill="#fff" stroke="#8c8c8c"/><path d="M137 24 L137 5 Q137 1.5 141 1.5 L214 1.5 Q217.5 1.5 217.5 5 L217.5 24" fill="#ececec" stroke="#9a9a9a"/></svg>
<div class="t" style="left:282px;top:97px;font-size:11.5px;font-weight:bold;letter-spacing:0.2px">Radio Screen</div>
<svg class="a" style="left:372px;top:98px" width="9" height="8"><path d="M0.5 0.5 L8 7.5 M8 0.5 L0.5 7.5" stroke="#555" stroke-width="1.3"/></svg>
<div class="t" style="left:397px;top:97px;font-size:11px">My Logbook</div>
<svg class="a" style="left:1025px;top:99px" width="9" height="5"><path d="M0 0 L8 0 L4 4.5 Z" fill="#555"/></svg>
<svg class="a" style="left:1040px;top:97px" width="9" height="9"><path d="M0.5 0.5 L8 8 M8 0.5 L0.5 8" stroke="#444" stroke-width="1.3"/></svg>
<div class="a" style="left:251px;top:113px;width:801px;height:552px;border:1px solid #8c8c8c;background:#fff"></div>
<div class="a" style="left:253px;top:115px;width:796px;height:546px;border-top:1px solid #707070;border-left:1px solid #707070;background:#000"></div>
<div class="a" style="left:254px;top:192px;width:794px;height:394px;overflow:hidden"><svg width="794" height="395" viewBox="0 0 794 395">
<defs>
<linearGradient id="oc" x1="0" y1="0" x2="0" y2="1"><stop offset="0" stop-color="#7c96ae"/><stop offset="0.1" stop-color="#6886a6"/><stop offset="0.22" stop-color="#54709c"/><stop offset="0.5" stop-color="#4862a0"/><stop offset="0.8" stop-color="#4c669c"/><stop offset="0.9" stop-color="#6686a8"/><stop offset="1" stop-color="#7898b4"/></linearGradient>
<filter id="tx" x="0" y="0" width="100%" height="100%"><feTurbulence type="fractalNoise" baseFrequency="0.35" numOctaves="2" seed="3"/><feColorMatrix values="0 0 0 0 0.72  0 0 0 0 0.86  0 0 0 0 0.92  0 0 0 -2.2 1.25"/></filter>
<filter id="bl" x="-10%" y="-10%" width="120%" height="120%"><feGaussianBlur stdDeviation="6"/></filter>
<filter id="halo" x="-5%" y="-5%" width="110%" height="110%"><feMorphology in="SourceAlpha" operator="dilate" radius="1.5" result="d"/><feGaussianBlur in="d" stdDeviation="2" result="b"/><feFlood flood-color="#9ab8cc" flood-opacity="0.75"/><feComposite in2="b" operator="in" result="h"/><feTurbulence type="fractalNoise" baseFrequency="0.22" numOctaves="3" seed="7" result="n"/><feColorMatrix in="n" type="matrix" values="0 0 0 0 0.1  0 0 0 0 0.08  0 0 0 0 0.02  0 0 0 -2.4 1.35" result="nd"/><feComposite in="nd" in2="SourceAlpha" operator="in" result="ndl"/><feComponentTransfer in="ndl" result="ndl2"><feFuncA type="linear" slope="0.45"/></feComponentTransfer><feMerge><feMergeNode in="h"/><feMergeNode in="SourceGraphic"/><feMergeNode in="ndl2"/></feMerge></filter>
</defs>
<rect width="794" height="395" fill="url(#oc)"/>
<!-- textured light overlay on oceans -->
<rect width="794" height="395" filter="url(#tx)" opacity="0.16"/>
<!-- arctic light zone -->
<path d="M0 0 L794 0 L794 22 L600 30 L400 28 L200 14 L0 30 Z" fill="#8aa2b8" opacity="0.55"/>
<g filter="url(#bl)" opacity="0.6">
<path d="M0 16 Q40 8 75 20 Q70 40 40 44 Q10 42 0 38 Z" fill="#2e4258"/>
<path d="M190 4 Q240 2 290 8 Q250 14 200 12 Z" fill="#2e4258"/>
<path d="M320 6 Q380 4 430 10 Q380 22 330 16 Z" fill="#34485e"/>
<path d="M560 4 Q620 0 700 6 Q640 14 570 12 Z" fill="#2a3a50"/>
<path d="M740 0 L794 0 L794 40 Q770 30 745 20 Z" fill="#2a3a50"/>
</g>
<!-- shallow seas -->
<g filter="url(#bl)">
<path d="M600 60 L700 48 L745 55 L730 90 L700 110 L665 135 L640 160 L625 200 L600 215 L596 150 L630 120 L655 80 Z" fill="#7a98b4" opacity="0.55"/>
<path d="M640 0 L794 0 L794 75 L745 80 L700 60 L650 50 Z" fill="#8aa4bc" opacity="0.35"/>
<path d="M128 140 L175 135 L200 160 L190 180 L150 170 Z" fill="#7a98b4" opacity="0.5"/>
<path d="M560 190 L640 195 L700 215 L690 235 L640 225 L590 220 Z" fill="#7a98b4" opacity="0.45"/>
<path d="M0 330 L794 320 L794 372 L0 366 Z" fill="#8aaac4" opacity="0.25"/>
</g>
<g filter="url(#halo)">
<!-- North America -->
<path d="M0 43 L40 42 L72 43 L100 45 L130 50 L140 56 L176 62 L190 58 L200 62 L214 72 L223 87 L219 97 L204 105 L194 99 L182 112 L171 124 L171 143 L165 134 L149 132 L132 132 L128 143 L136 152 L153 157 L161 171 L174 180 L180 186 L174 188 L149 167 L132 161 L116 153 L99 140 L87 124 L76 112 L76 97 L68 83 L54 66 L41 60 L21 64 L4 72 L0 72 Z" fill="#54a234"/>
<ellipse cx="157" cy="70" rx="19" ry="14" fill="#6a88a8"/>
<path d="M0 46 L30 46 L60 50 L72 65 L82 90 L92 118 L104 138 L118 150 L132 158 L128 162 L112 155 L96 140 L84 124 L76 106 L68 84 L54 66 L40 60 L20 64 L0 70 Z" fill="#b48462"/>
<path d="M75 60 L95 55 L110 70 L118 95 L126 118 L124 132 L108 128 L98 110 L88 88 Z" fill="#d0aa50"/>
<path d="M182 100 L205 88 L218 96 L200 106 L188 112 Z" fill="#c0a050"/>
<!-- arctic islands -->
<path d="M70 38 L90 30 L110 28 L130 32 L150 36 L140 46 L120 44 L100 42 Z" fill="#5a9838" opacity="0.9"/>
<path d="M130 22 L160 16 L195 18 L200 28 L190 40 L175 48 L160 42 L140 34 Z" fill="#78a048" opacity="0.9"/>
<path d="M134 14 L170 12 L200 16 L190 24 L150 24 Z" fill="#b08a60"/>
<!-- Greenland -->
<path d="M198 21 L219 17 L260 15.5 L314 18.6 L305 31 L289 43 L272 50 L256 60 L246 64 L235 45 L223 35 L202 29 Z" fill="#a87454"/>
<path d="M198 21 L219 17 L230 22 L215 30 L202 29 Z M300 20 L314 19 L305 31 L295 36 Z" fill="#7aa040"/>
<path d="M297 54 L306 51 L316 54 L310 59 L299 58 Z" fill="#b8a050"/>
<!-- UK / Ireland -->
<path d="M338 68 L346 70 L350 84 L342 88 L336 80 Z" fill="#54a234"/>
<path d="M326 78 L333 77 L334 85 L327 85 Z" fill="#54a234"/>
<!-- Eurasia -->
<path d="M363 76 L366 70 L376 74 L398 72 L400 50 L430 34 L480 30 L540 26 L600 30 L640 34 L680 38 L718 47 L743 52 L720 58 L697 60 L693 83 L680 70 L660 62 L656 78 L656 91 L635 107 L615 116 L615 134 L605 144 L587 155 L585 174 L574 191 L566 167 L555 139 L551 139 L538 152 L526 170 L519 177 L505 139 L491 145 L475 145 L472 174 L458 170 L441 169 L423 124 L413 119 L410 106 L400 112 L380 104 L366 100 L353 100 L347 112 L328 115 L327 102 L341 90 L350 85 Z" fill="#52a232"/>
<path d="M378 60 L390 55 L400 60 L399 76 L382 76 L376 70 Z" fill="#5a78a4"/>
<path d="M358 62 L365 52 L380 45 L395 42 L402 48 L390 55 L380 61 L376 72 L368 72 L362 66 Z" fill="#52a232"/>
<path d="M358 62 L365 52 L378 46 L372 58 L366 66 Z" fill="#b08058"/>
<path d="M328 103 L345 101 L350 112 L330 114 Z" fill="#c8a050"/>
<path d="M430 40 L520 36 L560 48 L540 70 L470 72 L430 60 Z" fill="#3a7a24"/>
<path d="M540 48 L596 46 L640 60 L620 80 L570 82 Z" fill="#c0a858"/>
<path d="M489 90 L540 80 L590 84 L620 100 L600 125 L575 140 L540 138 L510 128 L492 110 Z" fill="#a87050"/>
<path d="M408 106 L450 104 L480 116 L500 130 L480 140 L455 128 L420 116 Z" fill="#b07c58"/>
<path d="M423 124 L455 130 L472 145 L470 172 L450 168 L440 165 Z" fill="#d0a850"/>
<path d="M596 66 L640 70 L650 95 L630 110 L605 112 Z" fill="#d0b058"/>
<!-- seas -->
<path d="M408 97 L425 95 L437 100 L430 107 L410 106 Z" fill="#5a78a8"/>
<path d="M448 93 L458 92 L466 104 L463 118 L452 112 Z" fill="#5a78a8"/>
<path d="M332 115 L347 112 L353 104 L366 104 L380 110 L400 114 L410 110 L424 118 L420 125 L396 124 L370 120 L340 120 Z" fill="#5a78a8"/>
<path d="M366 101 L373 100 L392 113 L388 117 L378 109 L368 105 Z" fill="#58a034"/>
<path d="M396 104 L410 104 L408 114 L400 114 Z" fill="#7a9a40"/>
<path d="M454 132 L468 136 L475 145 L462 142 Z" fill="#5a78a8"/>
<path d="M417 128 L423 126 L441 165 L437 169 Z" fill="#4a6498"/>
<!-- Japan, Kamchatka -->
<path d="M635 124 L648 108 L662 91 L666 95 L652 116 L640 126 Z" fill="#52a232"/>
<path d="M697 60 L705 62 L700 80 L693 83 Z" fill="#52a232"/>
<path d="M774 41 L794 40 L794 70 L786 66 L778 56 Z" fill="#52a232"/>
<!-- Africa -->
<path d="M330 124 L367 118 L398 124 L413 126 L423 134 L441 169 L458 170 L455 180 L435 197 L435 228 L421 251 L408 269 L396 273 L388 273 L384 259 L374 228 L369 197 L363 186 L343 190 L322 182 L310 161 L314 143 Z" fill="#d0a448"/>
<path d="M316 165 L340 178 L369 180 L400 185 L430 190 L432 215 L420 240 L405 255 L392 230 L380 205 L350 192 L322 182 Z" fill="#449a2c"/>
<path d="M340 135 L380 130 L410 150 L395 170 L360 168 Z" fill="#c0905a" opacity="0.8"/>
<path d="M443 234 L456 228 L452 247 L446 255 Z" fill="#b08a58"/>
<!-- Indonesia / New Guinea -->
<path d="M557 185 L564 184 L583 206 L578 210 Z" fill="#52a232"/>
<path d="M577 209 L615 213 L614 217 L578 213 Z" fill="#52a232"/>
<path d="M588 186 L600 183 L608 190 L604 204 L592 205 L587 196 Z" fill="#52a232"/>
<path d="M610 192 L620 193 L618 205 L612 203 Z" fill="#7aa040"/>
<path d="M612 150 L620 152 L626 180 L618 182 L614 165 Z" fill="#6a9a3a"/>
<path d="M640 199 L660 203 L680 212 L676 216 L655 214 L642 208 Z" fill="#52a232"/>
<path d="M523 177 L527 178 L526 184 L522 183 Z" fill="#52a232"/>
<!-- Australia -->
<path d="M598 247 L615 234 L635 226 L656 226 L662 234 L681 255 L681 269 L670 284 L660 275 L635 273 L615 276 L600 271 Z" fill="#52a232"/>
<path d="M602 250 L625 238 L645 240 L650 258 L630 266 L606 262 Z" fill="#d0aa50"/>
<path d="M664 288 L672 288 L670 294 L665 293 Z" fill="#52a232"/>
<path d="M714 300 L739 280 L737 288 L718 300 Z" fill="#8aa050"/>
<!-- South America -->
<path d="M174 188 L185 178 L198 176 L219 178 L235 186 L250 200 L266 209 L266 222 L256 245 L235 263 L219 284 L202 300 L198 313 L200 321 L190 317 L182 304 L186 280 L192 259 L190 238 L176 218 L169 197 Z" fill="#52a232"/>
<path d="M169 197 L176 205 L192 240 L196 270 L190 300 L196 318 L188 316 L182 300 L186 275 L190 245 L176 220 Z" fill="#b08062"/>
<path d="M215 205 L250 205 L262 222 L248 248 L228 258 L222 235 Z" fill="#c8b058"/>
<path d="M198 200 L225 195 L225 215 L205 220 Z" fill="#3a7a24"/>
<!-- Antarctica -->
<path d="M0 362 L60 362 L130 360 L175 360 L192 354 L203 346 L210 338 L214 341 L206 352 L201 362 L212 369 L281 371 L300 362 L322 357 L363 354 L396 352 L458 346 L499 348 L541 346 L596 342 L656 346 L697 350 L718 356 L701 371 L794 371 L794 395 L0 395 Z" fill="#c08a64"/>
<path d="M0 366 L50 366 L90 372 L80 386 L0 387 Z" fill="#c8b458"/>
<path d="M0 368 L30 368 L40 384 L0 386 Z" fill="#58a838"/>
<path d="M162 365 L200 362 L212 369 L281 371 L272 380 L215 382 L172 379 Z" fill="#3a8a2a"/>
<path d="M0 386 L794 384 L794 395 L0 395 Z" fill="#c8967a"/>
<path d="M706 378 Q712 368 740 368 L794 368 L794 395 L740 395 Q712 392 706 385 Z" fill="#3a7a28"/>
</g>
<!-- night shade -->
<path d="M248 20 Q252 70 260 99 Q275 160 300 215 Q345 290 415 343 Q470 372 520 368 Q600 362 650 335 Q730 290 755 225 Q772 120 720 20 Z" fill="#0a1030" opacity="0.09"/>
</svg>
</div>
<svg width="0" height="0" style="position:absolute"><defs><linearGradient id="mg" x1="0" y1="0" x2="0" y2="1"><stop offset="0" stop-color="#c4c4c4"/><stop offset="0.3" stop-color="#f0f0f0"/><stop offset="0.55" stop-color="#ffffff"/><stop offset="1" stop-color="#a8a8a8"/></linearGradient></defs></svg>
<svg class="a" style="left:260px;top:120px;overflow:visible" width="155" height="51"><g transform="translate(5.1,0) scale(1.1,1)"><text x="0" y="35.9" font-family="Liberation Sans" font-weight="bold" font-size="36.0" textLength="131.6" lengthAdjust="spacing" fill="url(#mg)" stroke="url(#mg)" stroke-width="2.2" stroke-linejoin="round" style="">IC-7200</text></g></svg>
<svg class="a" style="left:956px;top:121px;overflow:visible" width="90" height="49.5"><g transform="translate(5.1,0) scale(1.1,1)"><text x="0" y="34.4" font-family="Liberation Sans" font-weight="bold" font-size="33.9" textLength="72.5" lengthAdjust="spacing" fill="url(#mg)" stroke="url(#mg)" stroke-width="2.2" stroke-linejoin="round" style="">USB</text></g></svg>
<svg class="a" style="left:258px;top:610px;overflow:visible" width="180" height="51"><g transform="translate(5.1,0) scale(1.1,1)"><text x="0" y="35.9" font-family="Liberation Sans" font-weight="bold" font-size="36.0" textLength="154.4" lengthAdjust="spacing" fill="url(#mg)" stroke="url(#mg)" stroke-width="2.2" stroke-linejoin="round" style="">20:47:47</text></g></svg>
<svg class="a" style="left:845px;top:610px;overflow:visible" width="201" height="51"><g transform="translate(5.1,0) scale(1.1,1)"><text x="0" y="35.9" font-family="Liberation Sans" font-weight="bold" font-size="36.0" textLength="173.5" lengthAdjust="spacing" fill="url(#mg)" stroke="url(#mg)" stroke-width="2.2" stroke-linejoin="round" style="">19:47:47z</text></g></svg>
<svg class="a" style="left:640px;top:188px;overflow:visible" width="397" height="75"><g transform="translate(6.0,0) scale(1.12,1)"><text x="0" y="59.0" font-family="Liberation Sans" font-weight="bold" font-size="68.3" textLength="343.7" lengthAdjust="spacing" fill="#606060" stroke="#606060" stroke-width="6" stroke-linejoin="round" style="">3.580.150</text><text x="0" y="59.0" font-family="Liberation Sans" font-weight="bold" font-size="68.3" textLength="343.7" lengthAdjust="spacing" fill="url(#mg)" stroke="url(#mg)" stroke-width="4" stroke-linejoin="round" style="">3.580.150</text></g></svg>
<div class="a" style="left:619px;top:666px;width:2px;height:2px;background:#a8a8a8"></div>
<div class="a" style="left:622px;top:666px;width:2px;height:2px;background:#a8a8a8"></div>
<div class="a" style="left:625px;top:666px;width:2px;height:2px;background:#a8a8a8"></div>
<div class="a" style="left:628px;top:666px;width:2px;height:2px;background:#a8a8a8"></div>
<div class="a" style="left:631px;top:666px;width:2px;height:2px;background:#a8a8a8"></div>
<div class="a" style="left:634px;top:666px;width:2px;height:2px;background:#a8a8a8"></div>
<div class="a" style="left:637px;top:666px;width:2px;height:2px;background:#a8a8a8"></div>
<div class="a" style="left:640px;top:666px;width:2px;height:2px;background:#a8a8a8"></div>
<div class="a" style="left:643px;top:666px;width:2px;height:2px;background:#a8a8a8"></div>
<div class="a" style="left:646px;top:666px;width:2px;height:2px;background:#a8a8a8"></div>
<div class="a" style="left:649px;top:666px;width:2px;height:2px;background:#a8a8a8"></div>
<div class="a" style="left:652px;top:666px;width:2px;height:2px;background:#a8a8a8"></div>
<div class="a" style="left:655px;top:666px;width:2px;height:2px;background:#a8a8a8"></div>
<div class="a" style="left:658px;top:666px;width:2px;height:2px;background:#a8a8a8"></div>
<div class="a" style="left:661px;top:666px;width:2px;height:2px;background:#a8a8a8"></div>
<div class="a" style="left:664px;top:666px;width:2px;height:2px;background:#a8a8a8"></div>
<div class="a" style="left:667px;top:666px;width:2px;height:2px;background:#a8a8a8"></div>
<div class="a" style="left:670px;top:666px;width:2px;height:2px;background:#a8a8a8"></div>
<div class="a" style="left:673px;top:666px;width:2px;height:2px;background:#a8a8a8"></div>
<div class="a" style="left:676px;top:666px;width:2px;height:2px;background:#a8a8a8"></div>
<div class="a" style="left:679px;top:666px;width:2px;height:2px;background:#a8a8a8"></div>
<div class="a" style="left:251px;top:672px;width:635px;height:19px;background:linear-gradient(90deg,#c2d2e4,#d4e1ef)"></div>
<div class="t" style="left:255px;top:677px;font-size:11px;color:#3a4a5c;letter-spacing:-0.35px">DX Cluster: Spots: SM2YER on HB9DRV-9 (DXSpider)</div>
<svg class="a" style="left:873px;top:677px" width="9" height="9"><path d="M0.8 0.8 L8.2 8.2 M8.2 0.8 L0.8 8.2" stroke="#3c4650" stroke-width="1.5"/></svg>
<svg class="a" style="left:858px;top:675px" width="9" height="11"><path d="M2 1 L7 1 M2.5 1 L2.5 6.5 M1 6.5 L8 6.5 M4.5 6.5 L4.5 10.5" stroke="#3c4650" stroke-width="1.2" fill="none"/><rect x="4.5" y="1" width="2" height="5.5" fill="#3c4650"/></svg>
<div class="a" style="left:251px;top:691px;width:635px;height:27px;background:linear-gradient(#fafafa,#f2f2f2 60%,#e8e8e8)"></div>
<div class="a" style="left:257px;top:694px;width:52px;height:22px;border:1px solid #3399ff;background:#e4edf8"></div>
<div class="a" style="left:262px;top:700px;width:11px;height:11px;border:1px solid #2a48a8;background:linear-gradient(#a8c0f0,#4a70d0)"></div>
<div class="t" style="left:277px;top:700px;font-size:11px">Close</div>
<div class="a" style="left:312px;top:697px;width:1px;height:17px;background:#c8c8c8"></div>
<div class="a" style="left:420px;top:697px;width:1px;height:17px;background:#c8c8c8"></div>
<div class="a" style="left:470px;top:697px;width:1px;height:17px;background:#c8c8c8"></div>
<div class="a" style="left:606px;top:697px;width:1px;height:17px;background:#c8c8c8"></div>
<div class="a" style="left:681px;top:697px;width:1px;height:17px;background:#c8c8c8"></div>
<div class="t" style="left:318px;top:700px;font-size:11px">Show<svg width="7" height="4" style="display:inline-block;vertical-align:middle;margin-left:3px;margin-bottom:2px"><path d="M0 0 L7 0 L3.5 3.5 Z" fill="#000"/></svg></div>
<div class="a" style="left:355px;top:695px;width:62px;height:20px;background:#fff"></div>
<div class="a" style="left:404px;top:696px;width:13px;height:18px;background:#f4f4f4"></div>
<div class="t" style="left:358px;top:700px;font-size:11px">ALL</div>
<svg class="a" style="left:406px;top:703px" width="8" height="5"><path d="M0 0 L7 0 L3.5 4 Z" fill="#000"/></svg>
<svg class="a" style="left:427px;top:697px" width="16" height="17"><rect x="1" y="1" width="9" height="11" fill="#dbe8f8" stroke="#6a90c8"/><rect x="5" y="5" width="9" height="11" fill="#b8d2f2" stroke="#6a90c8"/></svg>
<svg class="a" style="left:448px;top:697px" width="17" height="17"><path d="M1 1 L9 1 L12 4 L12 15 L1 15 Z" fill="#fff" stroke="#8090a0"/><circle cx="9" cy="9" r="4" fill="#e8f0f8" stroke="#404850" stroke-width="1.3"/><path d="M12 12 L16 16" stroke="#e08020" stroke-width="2.5"/></svg>
<svg class="a" style="left:476px;top:696px" width="18" height="18"><path d="M2 14 L6 4 Q10 0 14 3 L16 12 Z" fill="#f0b020" stroke="#b07000"/><circle cx="4" cy="15" r="2" fill="#d09000"/></svg>
<div class="t" style="left:495px;top:700px;font-size:11px">Alarms<svg width="7" height="4" style="display:inline-block;vertical-align:middle;margin-left:3px;margin-bottom:2px"><path d="M0 0 L7 0 L3.5 3.5 Z" fill="#000"/></svg></div>
<svg class="a" style="left:543px;top:697px" width="17" height="17"><rect x="1" y="6" width="12" height="10" fill="#dde8f4" stroke="#6080a0"/><path d="M3 9 L11 9 M3 11 L11 11 M3 13 L9 13" stroke="#6080a0"/><path d="M4 7 L9 2 L14 6" fill="#f0c040" stroke="#c08000"/><path d="M11 2 L16 1 L15 6 Z" fill="#30a030"/></svg>
<div class="t" style="left:561px;top:700px;font-size:11px">Options</div>
<svg class="a" style="left:612px;top:697px" width="16" height="16"><circle cx="8" cy="8" r="6.5" fill="#e8e8e8" stroke="#c8c8c8"/><path d="M2 8 L14 8 M8 2 L8 14 M4 4 Q8 8 4 12 M12 4 Q8 8 12 12" stroke="#d0d0d0" fill="none"/></svg>
<div class="t" style="left:630px;top:700px;font-size:11px;color:#b0b0b0">QRZ.com</div>
<svg class="a" style="left:688px;top:697px" width="16" height="16"><circle cx="8" cy="8" r="7" fill="#40b040" stroke="#208020"/><circle cx="8" cy="8" r="5" fill="#60c860"/><path d="M8 4 L8 12 M4 8 L12 8" stroke="#fff" stroke-width="2"/></svg>
<div class="t" style="left:705px;top:700px;font-size:11px">Add Spot</div>
<div class="a" style="left:252px;top:718px;width:634px;height:232px;border:1px solid #9a9a9a;background:#fff"></div>
<div class="a" style="left:253px;top:719px;width:613px;height:25px;background:linear-gradient(#f8f8f8,#ececec);border-bottom:2px solid #d8d8d8"></div>
<div class="a" style="left:279px;top:722px;width:1px;height:20px;background:#c8c8c8"></div>
<div class="a" style="left:339px;top:722px;width:1px;height:20px;background:#c8c8c8"></div>
<div class="a" style="left:386px;top:722px;width:1px;height:20px;background:#c8c8c8"></div>
<div class="a" style="left:487px;top:722px;width:1px;height:20px;background:#c8c8c8"></div>
<div class="a" style="left:586px;top:722px;width:1px;height:20px;background:#c8c8c8"></div>
<div class="a" style="left:657px;top:722px;width:1px;height:20px;background:#c8c8c8"></div>
<div class="t mono" style="left:287px;top:727px;font-size:13.33px;color:#1a1a1a">Date</div>
<div class="t mono" style="left:348px;top:727px;font-size:13.33px;color:#1a1a1a">Time</div>
<div class="t mono" style="left:450px;top:727px;font-size:13.33px;color:#1a1a1a">Freq</div>
<div class="t mono" style="left:494px;top:727px;font-size:13.33px;color:#1a1a1a">DX</div>
<div class="t mono" style="left:594px;top:727px;font-size:13.33px;color:#1a1a1a">Spotter</div>
<div class="t mono" style="left:665px;top:727px;font-size:13.33px;color:#1a1a1a">Comment</div>
<svg class="a" style="left:259px;top:747px" width="14" height="13"><path d="M1.5 1.5 L12 11.5 M12 1 L2 11.5" stroke="#a01818" stroke-width="2.2"/></svg>
<div class="t mono" style="left:295px;top:748px;font-size:13.33px;color:#1a1a1a">3-Jan</div>
<div class="t mono" style="left:348px;top:748px;font-size:13.33px;color:#1a1a1a">1947</div>
<div class="t mono" style="left:372px;width:110px;text-align:right;top:748px;font-size:13.33px;color:#1a1a1a">144.353.Ø</div>
<div class="t mono" style="left:494px;top:748px;font-size:13.33px;color:#1a1a1a">PA2CHR</div>
<div class="t mono" style="left:594px;top:748px;font-size:13.33px;color:#1a1a1a">US8ZAL</div>
<div class="t mono" style="left:665px;top:748px;font-size:13.33px;color:#1a1a1a;width:200px;overflow:hidden">KN66AU&lt;MS&gt;JO22XA tks Chri</div>
<svg class="a" style="left:259px;top:764px" width="14" height="13"><path d="M1.5 1.5 L12 11.5 M12 1 L2 11.5" stroke="#a01818" stroke-width="2.2"/></svg>
<div class="t mono" style="left:295px;top:765px;font-size:13.33px;color:#1a1a1a">3-Jan</div>
<div class="t mono" style="left:348px;top:765px;font-size:13.33px;color:#1a1a1a">1946</div>
<div class="t mono" style="left:372px;width:110px;text-align:right;top:765px;font-size:13.33px;color:#1a1a1a">21.Ø9Ø.1</div>
<div class="t mono" style="left:494px;top:765px;font-size:13.33px;color:#1a1a1a">XE2K</div>
<div class="t mono" style="left:594px;top:765px;font-size:13.33px;color:#1a1a1a">WB2WPM</div>
<div class="t mono" style="left:665px;top:765px;font-size:13.33px;color:#1a1a1a;width:200px;overflow:hidden">599 into BUFFALO</div>
<svg class="a" style="left:259px;top:781px" width="14" height="13"><path d="M1.5 1.5 L12 11.5 M12 1 L2 11.5" stroke="#a01818" stroke-width="2.2"/></svg>
<div class="t mono" style="left:295px;top:782px;font-size:13.33px;color:#1a1a1a">3-Jan</div>
<div class="t mono" style="left:348px;top:782px;font-size:13.33px;color:#1a1a1a">1947</div>
<div class="t mono" style="left:372px;width:110px;text-align:right;top:782px;font-size:13.33px;color:#1a1a1a">14.255.Ø</div>
<div class="t mono" style="left:494px;top:782px;font-size:13.33px;color:#1a1a1a">K9DIG</div>
<div class="t mono" style="left:594px;top:782px;font-size:13.33px;color:#1a1a1a">KE5UIU</div>
<div class="t mono" style="left:665px;top:782px;font-size:13.33px;color:#1a1a1a;width:200px;overflow:hidden">59+4Ø in okla.</div>
<svg class="a" style="left:259px;top:798px" width="14" height="13"><path d="M1.5 1.5 L12 11.5 M12 1 L2 11.5" stroke="#a01818" stroke-width="2.2"/></svg>
<div class="t mono" style="left:295px;top:799px;font-size:13.33px;color:#1a1a1a">3-Jan</div>
<div class="t mono" style="left:348px;top:799px;font-size:13.33px;color:#1a1a1a">1946</div>
<div class="t mono" style="left:372px;width:110px;text-align:right;top:799px;font-size:13.33px;color:#1a1a1a">1.826.5</div>
<div class="t mono" style="left:494px;top:799px;font-size:13.33px;color:#1a1a1a">VK3ZL</div>
<div class="t mono" style="left:594px;top:799px;font-size:13.33px;color:#1a1a1a">LA3XI</div>
<div class="t mono" style="left:665px;top:799px;font-size:13.33px;color:#1a1a1a;width:200px;overflow:hidden">still s 9 half hr after s</div>
<svg class="a" style="left:259px;top:815px" width="14" height="13"><path d="M1.5 1.5 L12 11.5 M12 1 L2 11.5" stroke="#a01818" stroke-width="2.2"/></svg>
<div class="t mono" style="left:295px;top:816px;font-size:13.33px;color:#1a1a1a">3-Jan</div>
<div class="t mono" style="left:348px;top:816px;font-size:13.33px;color:#1a1a1a">1947</div>
<div class="t mono" style="left:372px;width:110px;text-align:right;top:816px;font-size:13.33px;color:#1a1a1a">21.Ø83.2</div>
<div class="t mono" style="left:494px;top:816px;font-size:13.33px;color:#1a1a1a">W4GKM</div>
<div class="t mono" style="left:594px;top:816px;font-size:13.33px;color:#1a1a1a">W6YX</div>
<div class="t mono" style="left:665px;top:816px;font-size:13.33px;color:#1a1a1a;width:200px;overflow:hidden">RTTY</div>
<svg class="a" style="left:259px;top:832px" width="14" height="13"><path d="M1.5 1.5 L12 11.5 M12 1 L2 11.5" stroke="#a01818" stroke-width="2.2"/></svg>
<div class="t mono" style="left:295px;top:833px;font-size:13.33px;color:#1a1a1a">3-Jan</div>
<div class="t mono" style="left:348px;top:833px;font-size:13.33px;color:#1a1a1a">1946</div>
<div class="t mono" style="left:372px;width:110px;text-align:right;top:833px;font-size:13.33px;color:#1a1a1a">28.49Ø.Ø</div>
<div class="t mono" style="left:494px;top:833px;font-size:13.33px;color:#1a1a1a">DFØRPJ</div>
<div class="t mono" style="left:594px;top:833px;font-size:13.33px;color:#1a1a1a">DD4MS</div>
<div class="t mono" style="left:665px;top:833px;font-size:13.33px;color:#1a1a1a;width:200px;overflow:hidden">cq cq</div>
<svg class="a" style="left:259px;top:849px" width="14" height="13"><path d="M1.5 1.5 L12 11.5 M12 1 L2 11.5" stroke="#a01818" stroke-width="2.2"/></svg>
<div class="t mono" style="left:295px;top:850px;font-size:13.33px;color:#1a1a1a">3-Jan</div>
<div class="t mono" style="left:348px;top:850px;font-size:13.33px;color:#1a1a1a">1946</div>
<div class="t mono" style="left:372px;width:110px;text-align:right;top:850px;font-size:13.33px;color:#1a1a1a">14.1Ø1.4</div>
<div class="t mono" style="left:494px;top:850px;font-size:13.33px;color:#1a1a1a">N6XG</div>
<div class="t mono" style="left:594px;top:850px;font-size:13.33px;color:#1a1a1a">WO3P</div>
<div class="t mono" style="left:665px;top:850px;font-size:13.33px;color:#1a1a1a;width:200px;overflow:hidden"></div>
<svg class="a" style="left:259px;top:866px" width="14" height="13"><path d="M1.5 1.5 L12 11.5 M12 1 L2 11.5" stroke="#a01818" stroke-width="2.2"/></svg>
<div class="t mono" style="left:295px;top:867px;font-size:13.33px;color:#1a1a1a">3-Jan</div>
<div class="t mono" style="left:348px;top:867px;font-size:13.33px;color:#1a1a1a">1945</div>
<div class="t mono" style="left:372px;width:110px;text-align:right;top:867px;font-size:13.33px;color:#1a1a1a">145.45Ø.Ø</div>
<div class="t mono" style="left:494px;top:867px;font-size:13.33px;color:#1a1a1a">G4RSB</div>
<div class="t mono" style="left:594px;top:867px;font-size:13.33px;color:#1a1a1a">G1ISN</div>
<div class="t mono" style="left:665px;top:867px;font-size:13.33px;color:#1a1a1a;width:200px;overflow:hidden">sry wrong call and freque</div>
<svg class="a" style="left:259px;top:883px" width="14" height="13"><path d="M1.5 1.5 L12 11.5 M12 1 L2 11.5" stroke="#a01818" stroke-width="2.2"/></svg>
<div class="t mono" style="left:295px;top:884px;font-size:13.33px;color:#1a1a1a">3-Jan</div>
<div class="t mono" style="left:348px;top:884px;font-size:13.33px;color:#1a1a1a">1946</div>
<div class="t mono" style="left:372px;width:110px;text-align:right;top:884px;font-size:13.33px;color:#1a1a1a">14.Ø7Ø.2</div>
<div class="t mono" style="left:494px;top:884px;font-size:13.33px;color:#1a1a1a">Z21LS</div>
<div class="t mono" style="left:594px;top:884px;font-size:13.33px;color:#1a1a1a">AK4DW</div>
<div class="t mono" style="left:665px;top:884px;font-size:13.33px;color:#1a1a1a;width:200px;overflow:hidden">Zimbabwe 599 in TN</div>
<svg class="a" style="left:259px;top:900px" width="14" height="13"><path d="M1.5 1.5 L12 11.5 M12 1 L2 11.5" stroke="#a01818" stroke-width="2.2"/></svg>
<div class="t mono" style="left:295px;top:901px;font-size:13.33px;color:#1a1a1a">3-Jan</div>
<div class="t mono" style="left:348px;top:901px;font-size:13.33px;color:#1a1a1a">1946</div>
<div class="t mono" style="left:372px;width:110px;text-align:right;top:901px;font-size:13.33px;color:#1a1a1a">1.846.Ø</div>
<div class="t mono" style="left:494px;top:901px;font-size:13.33px;color:#1a1a1a">F6IGS</div>
<div class="t mono" style="left:594px;top:901px;font-size:13.33px;color:#1a1a1a">IZ1FKU</div>
<div class="t mono" style="left:665px;top:901px;font-size:13.33px;color:#1a1a1a;width:200px;overflow:hidden"></div>
<svg class="a" style="left:259px;top:917px" width="14" height="13"><path d="M1.5 1.5 L12 11.5 M12 1 L2 11.5" stroke="#a01818" stroke-width="2.2"/></svg>
<div class="t mono" style="left:295px;top:918px;font-size:13.33px;color:#1a1a1a">3-Jan</div>
<div class="t mono" style="left:348px;top:918px;font-size:13.33px;color:#1a1a1a">1946</div>
<div class="t mono" style="left:372px;width:110px;text-align:right;top:918px;font-size:13.33px;color:#1a1a1a">21.Ø87.1</div>
<div class="t mono" style="left:494px;top:918px;font-size:13.33px;color:#1a1a1a">W6WRT</div>
<div class="t mono" style="left:594px;top:918px;font-size:13.33px;color:#1a1a1a">AA3B</div>
<div class="t mono" style="left:665px;top:918px;font-size:13.33px;color:#1a1a1a;width:200px;overflow:hidden">RTTY</div>
<div class="a" style="left:866px;top:719px;width:16px;height:213px;background:#f0f0f0"></div>
<svg class="a" style="left:869px;top:726px" width="9" height="5"><path d="M0 4.5 L4.5 0 L9 4.5 Z" fill="#444"/></svg>
<svg class="a" style="left:869px;top:921px" width="9" height="5"><path d="M0 0 L4.5 4.5 L9 0 Z" fill="#444"/></svg>
<div class="a" style="left:867px;top:737px;width:14px;height:7px;border:1px solid #b0b0b0;border-radius:2px;background:linear-gradient(90deg,#eee,#d4d4d4)"></div>
<div class="a" style="left:253px;top:932px;width:613px;height:16px;background:#f0f0f0"></div>
<svg class="a" style="left:261px;top:936px" width="5" height="9"><path d="M4.5 0 L0 4.5 L4.5 9 Z" fill="#444"/></svg>
<svg class="a" style="left:855px;top:936px" width="5" height="9"><path d="M0 0 L4.5 4.5 L0 9 Z" fill="#444"/></svg>
<div class="a" style="left:273px;top:933px;width:413px;height:14px;border:1px solid #b0b0b0;border-radius:3px;background:linear-gradient(#f2f2f2,#d8d8d8)"></div>
<div class="a" style="left:476px;top:936px;width:1px;height:7px;background:#777"></div><div class="a" style="left:478px;top:936px;width:1px;height:7px;background:#777"></div><div class="a" style="left:480px;top:936px;width:1px;height:7px;background:#777"></div>
<svg class="a" style="left:251px;top:949px" width="640" height="19"><path d="M6 0 L24 18 L120 18 L120 0" fill="#ececec" stroke="#9a9a9a"/><path d="M370 0 L370 18 L246 18 L246 0" fill="#ececec" stroke="#9a9a9a"/><path d="M246 0 L246 18 L316 18 L300 0" fill="none"/><path d="M370 0 L370 18 M120 18 L370 18" stroke="#9a9a9a" fill="none"/><path d="M300 0 L318 18" stroke="#9a9a9a" fill="none"/><path d="M318 1 L318 19 L621 19 L621 0" fill="#fff" stroke="#9a9a9a"/></svg>
<div class="t" style="left:276px;top:954px;font-size:11px">30 Day Solar Data</div>
<div class="t" style="left:376px;top:954px;font-size:11px">Solar Cycle Progression</div>
<div class="t" style="left:499px;top:954px;font-size:11px">Audio Monitor</div>
<div class="t" style="left:577px;top:954px;font-size:11px;font-weight:bold;letter-spacing:0.19px">DX Cluster: Spots: SM2YER on HB9DRV-9 (DXSpider)</div>
<div class="a" style="left:893px;top:672px;width:159px;height:19px;background:linear-gradient(90deg,#c2d2e4,#d4e1ef)"></div>
<div class="t" style="left:897px;top:677px;font-size:11px;color:#3a4a5c;">Greyline</div>
<svg class="a" style="left:1039px;top:677px" width="9" height="9"><path d="M0.8 0.8 L8.2 8.2 M8.2 0.8 L0.8 8.2" stroke="#3c4650" stroke-width="1.5"/></svg>
<div class="a" style="left:1022px;top:676px;width:10px;height:9px;border:1px solid #3c4650;border-top-width:2px"></div>
<svg class="a" style="left:1008px;top:675px" width="9" height="11"><path d="M2 1 L7 1 M2.5 1 L2.5 6.5 M1 6.5 L8 6.5 M4.5 6.5 L4.5 10.5" stroke="#3c4650" stroke-width="1.2" fill="none"/><rect x="4.5" y="1" width="2" height="5.5" fill="#3c4650"/></svg>
<div class="a" style="left:893px;top:691px;width:159px;height:157px;background:#f0f0f0"></div>
<div class="a" style="left:893px;top:729px;width:159px;height:79px;overflow:hidden"><svg width="159" height="79" viewBox="0 0 159 79">
<rect width="159" height="79" fill="#6c92a8"/>
<path d="M0 13 Q25 8 40 15 Q52 24 62 46 Q75 69 95 69 Q118 68 130 52 Q140 30 150 17 Q155 13 159 13 L159 79 L0 79 Z" fill="#8ab4c8"/>
<path d="M0 9 L15 6 L33 9 L40 14 L43 18 L38 24 L30 29 L33 34 L28 33 L22 30 L12 22 L6 14 L0 14 Z" fill="#b8a480"/>
<path d="M40 3 L58 3 L60 8 L52 12 L46 8 Z" fill="#a08070"/>
<path d="M35 36 L46 38 L53 41 L46 54 L39 62 L36 54 L35 40 Z" fill="#b0b088"/>
<path d="M63 13 L85 12 L85 23 L63 24 Z" fill="#a8a880"/>
<path d="M63 25 L85 25 L91 36 L85 43 L81 54 L77 54 L73 37 L63 33 Z" fill="#b89870"/>
<path d="M85 8 L128 6 L151 9 L135 16 L128 23 L121 30 L113 33 L100 32 L94 26 L85 22 Z" fill="#b4a478"/>
<path d="M119 46 L133 44 L136 55 L120 54 Z" fill="#b8a878"/>
<path d="M0 74 L71 72 L92 69 L139 71 L159 76 L159 79 L0 79 Z" fill="#c0a070"/>
<path d="M70 74 L139 72 L139 79 L70 79 Z" fill="#c8a0b8"/>
<path d="M76 7 L79 4.5 L82 7 L84 8 L83 13 L75 13 L74 8 Z" fill="#f8c830" stroke="#102080" stroke-width="1.2"/>
</svg>
</div>
<div class="a" style="left:940px;top:849px;width:2px;height:2px;background:#a8a8a8"></div>
<div class="a" style="left:943px;top:849px;width:2px;height:2px;background:#a8a8a8"></div>
<div class="a" style="left:946px;top:849px;width:2px;height:2px;background:#a8a8a8"></div>
<div class="a" style="left:949px;top:849px;width:2px;height:2px;background:#a8a8a8"></div>
<div class="a" style="left:952px;top:849px;width:2px;height:2px;background:#a8a8a8"></div>
<div class="a" style="left:955px;top:849px;width:2px;height:2px;background:#a8a8a8"></div>
<div class="a" style="left:958px;top:849px;width:2px;height:2px;background:#a8a8a8"></div>
<div class="a" style="left:961px;top:849px;width:2px;height:2px;background:#a8a8a8"></div>
<div class="a" style="left:964px;top:849px;width:2px;height:2px;background:#a8a8a8"></div>
<div class="a" style="left:967px;top:849px;width:2px;height:2px;background:#a8a8a8"></div>
<div class="a" style="left:970px;top:849px;width:2px;height:2px;background:#a8a8a8"></div>
<div class="a" style="left:973px;top:849px;width:2px;height:2px;background:#a8a8a8"></div>
<div class="a" style="left:976px;top:849px;width:2px;height:2px;background:#a8a8a8"></div>
<div class="a" style="left:979px;top:849px;width:2px;height:2px;background:#a8a8a8"></div>
<div class="a" style="left:982px;top:849px;width:2px;height:2px;background:#a8a8a8"></div>
<div class="a" style="left:985px;top:849px;width:2px;height:2px;background:#a8a8a8"></div>
<div class="a" style="left:988px;top:849px;width:2px;height:2px;background:#a8a8a8"></div>
<div class="a" style="left:991px;top:849px;width:2px;height:2px;background:#a8a8a8"></div>
<div class="a" style="left:994px;top:849px;width:2px;height:2px;background:#a8a8a8"></div>
<div class="a" style="left:997px;top:849px;width:2px;height:2px;background:#a8a8a8"></div>
<div class="a" style="left:1000px;top:849px;width:2px;height:2px;background:#a8a8a8"></div>
<div class="a" style="left:888px;top:790px;width:2px;height:2px;background:#b8b8b8"></div>
<div class="a" style="left:888px;top:793px;width:2px;height:2px;background:#b8b8b8"></div>
<div class="a" style="left:888px;top:796px;width:2px;height:2px;background:#b8b8b8"></div>
<div class="a" style="left:888px;top:799px;width:2px;height:2px;background:#b8b8b8"></div>
<div class="a" style="left:888px;top:802px;width:2px;height:2px;background:#b8b8b8"></div>
<div class="a" style="left:888px;top:805px;width:2px;height:2px;background:#b8b8b8"></div>
<div class="a" style="left:888px;top:808px;width:2px;height:2px;background:#b8b8b8"></div>
<div class="a" style="left:888px;top:811px;width:2px;height:2px;background:#b8b8b8"></div>
<div class="a" style="left:888px;top:814px;width:2px;height:2px;background:#b8b8b8"></div>
<div class="a" style="left:888px;top:817px;width:2px;height:2px;background:#b8b8b8"></div>
<div class="a" style="left:888px;top:820px;width:2px;height:2px;background:#b8b8b8"></div>
<div class="a" style="left:888px;top:823px;width:2px;height:2px;background:#b8b8b8"></div>
<div class="a" style="left:888px;top:826px;width:2px;height:2px;background:#b8b8b8"></div>
<div class="a" style="left:888px;top:829px;width:2px;height:2px;background:#b8b8b8"></div>
<div class="a" style="left:888px;top:832px;width:2px;height:2px;background:#b8b8b8"></div>
<div class="a" style="left:888px;top:835px;width:2px;height:2px;background:#b8b8b8"></div>
<div class="a" style="left:888px;top:838px;width:2px;height:2px;background:#b8b8b8"></div>
<div class="a" style="left:888px;top:841px;width:2px;height:2px;background:#b8b8b8"></div>
<div class="a" style="left:888px;top:844px;width:2px;height:2px;background:#b8b8b8"></div>
<div class="a" style="left:888px;top:847px;width:2px;height:2px;background:#b8b8b8"></div>
<div class="a" style="left:888px;top:850px;width:2px;height:2px;background:#b8b8b8"></div>
<div class="a" style="left:888px;top:853px;width:2px;height:2px;background:#b8b8b8"></div>
<div class="a" style="left:888px;top:856px;width:2px;height:2px;background:#b8b8b8"></div>
<div class="a" style="left:888px;top:859px;width:2px;height:2px;background:#b8b8b8"></div>
<div class="a" style="left:888px;top:862px;width:2px;height:2px;background:#b8b8b8"></div>
<div class="a" style="left:888px;top:865px;width:2px;height:2px;background:#b8b8b8"></div>
<div class="a" style="left:888px;top:868px;width:2px;height:2px;background:#b8b8b8"></div>
<div class="a" style="left:888px;top:871px;width:2px;height:2px;background:#b8b8b8"></div>
<div class="a" style="left:888px;top:874px;width:2px;height:2px;background:#b8b8b8"></div>
<div class="a" style="left:888px;top:877px;width:2px;height:2px;background:#b8b8b8"></div>
<div class="a" style="left:888px;top:880px;width:2px;height:2px;background:#b8b8b8"></div>
<div class="a" style="left:888px;top:883px;width:2px;height:2px;background:#b8b8b8"></div>
<div class="a" style="left:888px;top:886px;width:2px;height:2px;background:#b8b8b8"></div>
<div class="a" style="left:888px;top:889px;width:2px;height:2px;background:#b8b8b8"></div>
<div class="a" style="left:888px;top:892px;width:2px;height:2px;background:#b8b8b8"></div>
<div class="a" style="left:888px;top:895px;width:2px;height:2px;background:#b8b8b8"></div>
<div class="a" style="left:888px;top:898px;width:2px;height:2px;background:#b8b8b8"></div>
<div class="a" style="left:888px;top:901px;width:2px;height:2px;background:#b8b8b8"></div>
<div class="a" style="left:888px;top:904px;width:2px;height:2px;background:#b8b8b8"></div>
<div class="a" style="left:888px;top:907px;width:2px;height:2px;background:#b8b8b8"></div>
<div class="a" style="left:888px;top:910px;width:2px;height:2px;background:#b8b8b8"></div>
<div class="a" style="left:888px;top:913px;width:2px;height:2px;background:#b8b8b8"></div>
<div class="a" style="left:888px;top:916px;width:2px;height:2px;background:#b8b8b8"></div>
<div class="a" style="left:888px;top:919px;width:2px;height:2px;background:#b8b8b8"></div>
<div class="a" style="left:888px;top:922px;width:2px;height:2px;background:#b8b8b8"></div>
<div class="a" style="left:888px;top:925px;width:2px;height:2px;background:#b8b8b8"></div>
<div class="a" style="left:888px;top:928px;width:2px;height:2px;background:#b8b8b8"></div>
<div class="a" style="left:893px;top:854px;width:159px;height:19px;background:linear-gradient(90deg,#c2d2e4,#d4e1ef)"></div>
<div class="t" style="left:897px;top:859px;font-size:11px;color:#3a4a5c;">Clock</div>
<svg class="a" style="left:1039px;top:859px" width="9" height="9"><path d="M0.8 0.8 L8.2 8.2 M8.2 0.8 L0.8 8.2" stroke="#3c4650" stroke-width="1.5"/></svg>
<div class="a" style="left:1022px;top:858px;width:10px;height:9px;border:1px solid #3c4650;border-top-width:2px"></div>
<svg class="a" style="left:1008px;top:857px" width="9" height="11"><path d="M2 1 L7 1 M2.5 1 L2.5 6.5 M1 6.5 L8 6.5 M4.5 6.5 L4.5 10.5" stroke="#3c4650" stroke-width="1.2" fill="none"/><rect x="4.5" y="1" width="2" height="5.5" fill="#3c4650"/></svg>
<div class="a" style="left:893px;top:872px;width:159px;height:96px;background:#000"></div>
<svg width="0" height="0" style="position:absolute"><defs><linearGradient id="cg" x1="0" y1="0" x2="0" y2="1"><stop offset="0" stop-color="#e8e8e8"/><stop offset="0.45" stop-color="#ffffff"/><stop offset="1" stop-color="#a8a8a8"/></linearGradient></defs></svg>
<svg class="a" style="left:905px;top:900px" width="140" height="40"><text x="4.2" y="32" font-family="Liberation Sans" font-size="31" textLength="124" lengthAdjust="spacingAndGlyphs" fill="url(#cg)" stroke="url(#cg)" stroke-width="1.5" stroke-linejoin="round">20:47:47</text></svg>
<div class="a" style="left:1052px;top:87px;width:228px;height:881px;background:#f0f0f0"></div>
<div class="a" style="left:1059px;top:87px;width:200px;height:19px;background:linear-gradient(90deg,#c2d2e4,#d4e1ef)"></div>
<div class="t" style="left:1063px;top:92px;font-size:11px;color:#3a4a5c;">80m</div>
<svg class="a" style="left:1246px;top:92px" width="9" height="9"><path d="M0.8 0.8 L8.2 8.2 M8.2 0.8 L0.8 8.2" stroke="#3c4650" stroke-width="1.5"/></svg>
<svg class="a" style="left:1231px;top:90px" width="9" height="11"><path d="M2 1 L7 1 M2.5 1 L2.5 6.5 M1 6.5 L8 6.5 M4.5 6.5 L4.5 10.5" stroke="#3c4650" stroke-width="1.2" fill="none"/><rect x="4.5" y="1" width="2" height="5.5" fill="#3c4650"/></svg>
<div class="a" style="left:1060px;top:106px;width:199px;height:846px;border:1px solid #9a9a9a;border-top:none;background:#fdf5eb"></div>
<div class="a" style="left:1061px;top:107px;width:197px;height:26px;background:linear-gradient(#fbfbfb,#f4f4f4 50%,#e8e8e8)"></div>
<div class="t" style="left:1069px;top:114px;font-size:11px">Filter<svg width="7" height="4" style="display:inline-block;vertical-align:middle;margin-left:3px;margin-bottom:2px"><path d="M0 0 L7 0 L3.5 3.5 Z" fill="#000"/></svg></div>
<div class="a" style="left:1107px;top:111px;width:1px;height:17px;background:#c8c8c8"></div>
<div class="a" style="left:1179px;top:111px;width:1px;height:17px;background:#c8c8c8"></div>
<svg class="a" style="left:1113px;top:111px" width="17" height="17"><path d="M3 4 L3 10 L9 10 M3 10 Q8 2 13 6 Q16 10 12 15" stroke="#b8b8b8" stroke-width="2.6" fill="none"/></svg>
<svg class="a" style="left:1136px;top:111px" width="17" height="17"><path d="M4 0 L4 13 L17 13 M0 4 L13 4 L13 17 M2 15 L15 2" stroke="#000" stroke-width="1.5" fill="none"/></svg>
<div class="a" style="left:1155px;top:109px;width:22px;height:22px;border:1px solid #3399ff;background:#e4edf8"></div>
<svg class="a" style="left:1160px;top:111px" width="14" height="18"><path d="M1 1 L1 14 L4.5 11 L7.5 17 L9.5 16 L6.5 10 L11 10 Z" fill="#fff" stroke="#909090"/></svg>
<svg class="a" style="left:1186px;top:111px" width="17" height="17"><rect x="1" y="6" width="12" height="10" fill="#dde8f4" stroke="#6080a0"/><path d="M3 9 L11 9 M3 11 L11 11 M3 13 L9 13" stroke="#6080a0"/><path d="M4 7 L9 2 L14 6" fill="#f0c040" stroke="#c08000"/><path d="M11 2 L16 1 L15 6 Z" fill="#30a030"/></svg>
<svg class="a" style="left:1204px;top:119px" width="6" height="4"><path d="M0 0 L6 0 L3 3.5 Z" fill="#000"/></svg>
<svg class="a" style="left:1061px;top:133px" width="197" height="818"><rect x="43" y="18.0" width="11" height="2" fill="#5a5a5a"/><rect x="47" y="33.5" width="7" height="2" fill="#5a5a5a"/><rect x="47" y="49.1" width="7" height="2" fill="#5a5a5a"/><rect x="47" y="64.6" width="7" height="2" fill="#5a5a5a"/><rect x="47" y="80.2" width="7" height="2" fill="#5a5a5a"/><rect x="43" y="95.7" width="11" height="2" fill="#5a5a5a"/><rect x="47" y="111.2" width="7" height="2" fill="#5a5a5a"/><rect x="47" y="126.8" width="7" height="2" fill="#5a5a5a"/><rect x="47" y="142.3" width="7" height="2" fill="#5a5a5a"/><rect x="47" y="157.9" width="7" height="2" fill="#5a5a5a"/><rect x="43" y="173.4" width="11" height="2" fill="#5a5a5a"/><rect x="47" y="188.9" width="7" height="2" fill="#5a5a5a"/><rect x="47" y="204.5" width="7" height="2" fill="#5a5a5a"/><rect x="47" y="220.0" width="7" height="2" fill="#5a5a5a"/><rect x="47" y="235.6" width="7" height="2" fill="#5a5a5a"/><rect x="43" y="251.1" width="11" height="2" fill="#5a5a5a"/><rect x="47" y="266.6" width="7" height="2" fill="#5a5a5a"/><rect x="47" y="282.2" width="7" height="2" fill="#5a5a5a"/><rect x="47" y="297.7" width="7" height="2" fill="#5a5a5a"/><rect x="47" y="313.3" width="7" height="2" fill="#5a5a5a"/><rect x="43" y="328.8" width="11" height="2" fill="#5a5a5a"/><rect x="47" y="344.3" width="7" height="2" fill="#5a5a5a"/><rect x="47" y="359.9" width="7" height="2" fill="#5a5a5a"/><rect x="47" y="375.4" width="7" height="2" fill="#5a5a5a"/><rect x="47" y="391.0" width="7" height="2" fill="#5a5a5a"/><rect x="43" y="406.5" width="11" height="2" fill="#5a5a5a"/><rect x="47" y="422.0" width="7" height="2" fill="#5a5a5a"/><rect x="47" y="437.6" width="7" height="2" fill="#5a5a5a"/><rect x="47" y="453.1" width="7" height="2" fill="#5a5a5a"/><rect x="47" y="468.7" width="7" height="2" fill="#5a5a5a"/><rect x="43" y="484.2" width="11" height="2" fill="#5a5a5a"/><rect x="47" y="499.7" width="7" height="2" fill="#5a5a5a"/><rect x="47" y="515.3" width="7" height="2" fill="#5a5a5a"/><rect x="47" y="530.8" width="7" height="2" fill="#5a5a5a"/><rect x="47" y="546.4" width="7" height="2" fill="#5a5a5a"/><rect x="43" y="561.9" width="11" height="2" fill="#5a5a5a"/><rect x="47" y="577.4" width="7" height="2" fill="#5a5a5a"/><rect x="47" y="593.0" width="7" height="2" fill="#5a5a5a"/><rect x="47" y="608.5" width="7" height="2" fill="#5a5a5a"/><rect x="47" y="624.1" width="7" height="2" fill="#5a5a5a"/><rect x="43" y="639.6" width="11" height="2" fill="#5a5a5a"/><rect x="47" y="655.1" width="7" height="2" fill="#5a5a5a"/><rect x="47" y="670.7" width="7" height="2" fill="#5a5a5a"/><rect x="47" y="686.2" width="7" height="2" fill="#5a5a5a"/><rect x="47" y="701.8" width="7" height="2" fill="#5a5a5a"/><rect x="43" y="717.3" width="11" height="2" fill="#5a5a5a"/><rect x="47" y="732.8" width="7" height="2" fill="#5a5a5a"/><rect x="47" y="748.4" width="7" height="2" fill="#5a5a5a"/><rect x="47" y="763.9" width="7" height="2" fill="#5a5a5a"/><rect x="47" y="779.5" width="7" height="2" fill="#5a5a5a"/><rect x="43" y="795.0" width="11" height="2" fill="#5a5a5a"/><rect x="54.5" y="16" width="3.5" height="786" fill="#e0a030"/><rect x="58" y="16" width="2" height="786" fill="#8a8a9a"/><rect x="53.5" y="16" width="1" height="786" fill="#b08060"/><line x1="96" y1="22" x2="62" y2="37" stroke="#2e5a5a" stroke-width="1"/><line x1="96" y1="42" x2="62" y2="37" stroke="#2e5a5a" stroke-width="1"/><line x1="96" y1="62" x2="62" y2="52" stroke="#2e5a5a" stroke-width="1"/><line x1="96" y1="82" x2="62" y2="63" stroke="#2e5a5a" stroke-width="1"/><line x1="96" y1="102.6" x2="62" y2="74" stroke="#2e5a5a" stroke-width="1"/><line x1="96" y1="124" x2="62" y2="148" stroke="#2e5a5a" stroke-width="1"/><line x1="96" y1="143" x2="62" y2="148" stroke="#2e5a5a" stroke-width="1"/><line x1="96" y1="164" x2="62" y2="156" stroke="#2e5a5a" stroke-width="1"/><line x1="96" y1="183.5" x2="62" y2="163.60000000000002" stroke="#2e5a5a" stroke-width="1"/><line x1="96" y1="201" x2="62" y2="170.7" stroke="#2e5a5a" stroke-width="1"/><line x1="96" y1="220.5" x2="62" y2="178" stroke="#2e5a5a" stroke-width="1"/><line x1="96" y1="245" x2="62" y2="240" stroke="#2e5a5a" stroke-width="1"/><line x1="96" y1="265" x2="62" y2="253.60000000000002" stroke="#2e5a5a" stroke-width="1"/><line x1="96" y1="285" x2="62" y2="253.60000000000002" stroke="#2e5a5a" stroke-width="1"/><line x1="96" y1="307" x2="62" y2="359.5" stroke="#2e5a5a" stroke-width="1"/><line x1="96" y1="326" x2="62" y2="451" stroke="#2e5a5a" stroke-width="1"/><line x1="96" y1="347" x2="62" y2="471" stroke="#2e5a5a" stroke-width="1"/><line x1="96" y1="367" x2="62" y2="480" stroke="#2e5a5a" stroke-width="1"/><line x1="96" y1="387" x2="61" y2="665" stroke="#2e5a5a" stroke-width="1"/><path d="M19 144 L41 144" stroke="#2e4e52" stroke-width="1.2"/><path d="M37 137 L53 144 L37 151 L40 144 Z" fill="#2e4e52"/></svg>
<div class="t" style="left:1073px;top:265px;font-size:22px;font-weight:bold;color:#2e4e52;transform:scaleX(1.05);transform-origin:0 0">M</div>
<div class="t" style="left:1062px;width:42px;text-align:right;top:144.5px;font-size:14px;color:#333">3500</div>
<div class="t" style="left:1062px;width:42px;text-align:right;top:222.2px;font-size:14px;color:#333">3550</div>
<div class="t" style="left:1062px;width:42px;text-align:right;top:299.9px;font-size:14px;color:#333">3600</div>
<div class="t" style="left:1062px;width:42px;text-align:right;top:377.6px;font-size:14px;color:#333">3650</div>
<div class="t" style="left:1062px;width:42px;text-align:right;top:455.3px;font-size:14px;color:#333">3700</div>
<div class="t" style="left:1062px;width:42px;text-align:right;top:533.0px;font-size:14px;color:#333">3750</div>
<div class="t" style="left:1062px;width:42px;text-align:right;top:610.7px;font-size:14px;color:#333">3800</div>
<div class="t" style="left:1062px;width:42px;text-align:right;top:688.4px;font-size:14px;color:#333">3850</div>
<div class="t" style="left:1062px;width:42px;text-align:right;top:766.1px;font-size:14px;color:#333">3900</div>
<div class="t" style="left:1062px;width:42px;text-align:right;top:843.8px;font-size:14px;color:#333">3950</div>
<div class="t" style="left:1062px;width:42px;text-align:right;top:921.5px;font-size:14px;color:#333">4000</div>
<div class="t" style="left:1161px;top:144.0px;font-size:15px;color:#222">AN5CRM</div>
<div class="t" style="left:1161px;top:164.0px;font-size:15px;color:#222">EA8TT</div>
<div class="t" style="left:1161px;top:184.0px;font-size:15px;color:#222">SQ85IARU</div>
<div class="t" style="left:1161px;top:204.2px;font-size:16px;font-weight:bold;color:#ff0000;letter-spacing:0.5px">C31CT</div>
<div class="t" style="left:1161px;top:225.0px;font-size:15px;color:#222">HB9DAX</div>
<div class="t" style="left:1161px;top:246.0px;font-size:15px;color:#222">ON4FD</div>
<div class="t" style="left:1161px;top:266.2px;font-size:16px;font-weight:bold;color:#ff0000;letter-spacing:0.5px">RZ3DVP</div>
<div class="t" style="left:1161px;top:286.0px;font-size:15px;color:#222">PE1MPA</div>
<div class="t" style="left:1161px;top:306.2px;font-size:16px;font-weight:bold;color:#ff0000;letter-spacing:0.5px">OK2SAR</div>
<div class="t" style="left:1161px;top:327.2px;font-size:16px;font-weight:bold;color:#ff0000;letter-spacing:0.5px">G&#216;MTN</div>
<div class="t" style="left:1161px;top:347.0px;font-size:15px;color:#222">OK1DVM</div>
<div class="t" style="left:1161px;top:368.0px;font-size:15px;color:#222">IK1ZNN</div>
<div class="t" style="left:1161px;top:388.0px;font-size:15px;color:#222">IK2THN</div>
<div class="t" style="left:1161px;top:408.0px;font-size:15px;color:#222">IK8HCK</div>
<div class="t" style="left:1161px;top:428.0px;font-size:15px;color:#222">DL3KDC</div>
<div class="t" style="left:1161px;top:449.2px;font-size:16px;font-weight:bold;color:#ff0000;letter-spacing:0.5px">TA3AX</div>
<div class="t" style="left:1161px;top:469.0px;font-size:15px;color:#222">OR&#216;A</div>
<div class="t" style="left:1161px;top:489.0px;font-size:15px;color:#222">ON8DM</div>
<div class="t" style="left:1161px;top:510.0px;font-size:15px;color:#222">KG4OJT</div>
<svg class="a" style="left:1059px;top:951px" width="120" height="17"><path d="M8 0 L26 17 L100 17 L80 0" fill="#ececec" stroke="#9a9a9a"/><path d="M60 0 L78 17 L107 17 L107 0 Z" fill="#fff" stroke="none"/><path d="M60 0 L77 17 M107 0 L107 17" stroke="#9a9a9a" fill="none"/></svg>
<div class="t" style="left:1085px;top:955px;font-size:11px">40m (S)</div>
<div class="t" style="left:1133px;top:955px;font-size:11px;font-weight:bold">80m</div>
<svg class="a" style="left:1260px;top:98px" width="20" height="64"><path d="M20 -4 L4 12 L3 58 Q3 62 7 62 L20 62" fill="#fff" stroke="#8a8a8a"/></svg>
<div class="t" style="left:1265px;top:112px;font-size:11px;font-weight:bold;transform-origin:0 0;transform:translate(12px,0) rotate(90deg)">Rotator</div>
%%BODY%%
</body></html>
